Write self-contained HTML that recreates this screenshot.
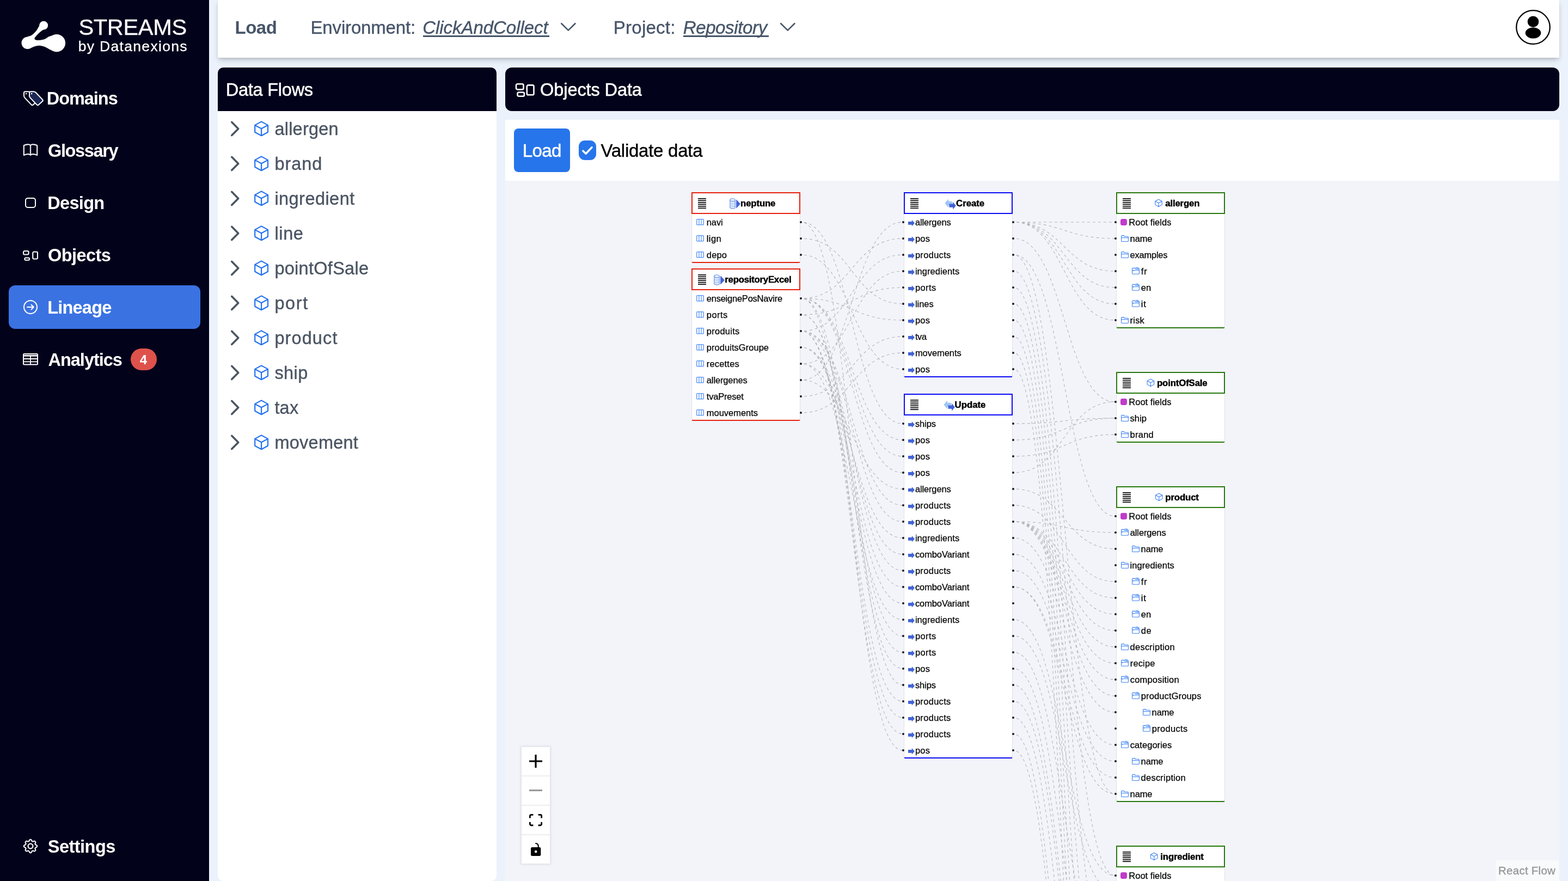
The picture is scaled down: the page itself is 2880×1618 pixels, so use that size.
<!DOCTYPE html>
<html lang="en"><head><meta charset="utf-8"><title>STREAMS by Datanexions - Lineage</title>
<style>
*{box-sizing:border-box;margin:0;padding:0}
html,body{width:2880px;height:1618px;overflow:hidden;background:#ecf2fb;font-family:"Liberation Sans",sans-serif}
body{position:relative}
.t{position:absolute;white-space:nowrap;line-height:1;display:block}
#app{position:absolute;left:0;top:0;width:2880px;height:1618px;overflow:hidden;will-change:transform}

.nh{position:absolute;background:#fff;border:2px solid;height:40px;width:200px}
.nb{position:absolute;background:#fff;border-left:1px solid #dfe1e9;border-right:1px solid #dfe1e9;border-bottom:2px solid;border-radius:0 0 3px 3px;width:200px}
.hd{position:absolute;width:4.4px;height:4.4px;border-radius:50%;background:#1a192b}
</style></head>
<body>
<div id="app">
<aside id="sidebar" aria-label="Main navigation"><div style="position:absolute;left:0px;top:0px;width:384px;height:1618px;background:#02021b;"></div>
<svg style="position:absolute;left:0;top:0;overflow:visible" width="384" height="120"><path d="M80.09 40.75C81.78 41.14 84.50 43.08 85.54 44.32C86.57 45.57 86.57 46.89 86.31 48.21C86.05 49.53 85.54 50.91 83.98 52.26C82.43 53.60 79.45 54.51 76.98 56.30C74.52 58.09 71.46 60.65 69.21 62.99C66.95 65.32 63.97 68.56 63.45 70.30C62.93 72.03 64.49 72.84 66.10 73.41C67.70 73.98 70.37 73.98 73.09 73.72C75.82 73.46 79.32 73.04 82.43 71.85C85.54 70.66 88.13 67.65 91.76 66.56C95.39 65.47 100.05 63.19 104.20 65.32C108.35 67.44 116.64 74.65 116.64 79.32C116.64 83.98 108.09 91.24 104.20 93.31C100.31 95.39 96.68 92.85 93.31 91.76C89.94 90.67 87.09 88.08 83.98 86.78C80.87 85.48 77.76 84.32 74.65 83.98C71.54 83.64 68.43 84.03 65.32 84.76C62.21 85.48 58.58 87.69 55.99 88.34C53.40 88.98 52.10 90.28 49.77 88.65C47.43 87.01 42.12 81.91 41.99 78.54C41.86 75.17 46.40 70.68 48.99 68.43C51.58 66.17 54.69 66.87 57.54 65.01C60.39 63.14 63.89 59.77 66.10 57.23C68.30 54.69 69.65 51.66 70.76 49.77C71.88 47.87 72.01 47.17 72.78 45.88C73.56 44.58 74.21 42.85 75.43 41.99C76.65 41.14 78.41 40.36 80.09 40.75Z" fill="#fff"/><circle cx="80.2" cy="46.7" r="7.9" fill="#fff"/><circle cx="50.6" cy="78.8" r="11.1" fill="#fff"/><circle cx="104" cy="79.1" r="16.1" fill="#fff"/></svg>
<span class="t" style="left:144.47px;top:26px;font-size:41.5px;line-height:47px;letter-spacing:-0.320px;color:#fff;-webkit-text-stroke:0.3px #fff;">STREAMS</span>
<span class="t" style="left:143.64px;top:70px;font-size:26.5px;line-height:30px;letter-spacing:1.331px;color:#fff;-webkit-text-stroke:0.3px #fff;">by Datanexions</span>
<div style="position:absolute;left:16px;top:524px;width:352px;height:80px;background:#3b72e2;border-radius:12px;"></div>
<span class="t" style="left:85.73px;top:163px;font-size:32.5px;line-height:36px;letter-spacing:-1.041px;font-weight:700;color:#fff;">Domains</span>
<span class="t" style="left:88.07px;top:259px;font-size:32.5px;line-height:36px;letter-spacing:-1.386px;font-weight:700;color:#fff;">Glossary</span>
<span class="t" style="left:87.23px;top:355px;font-size:32.5px;line-height:36px;letter-spacing:-0.673px;font-weight:700;color:#fff;">Design</span>
<span class="t" style="left:88.07px;top:451px;font-size:32.5px;line-height:36px;letter-spacing:-0.574px;font-weight:700;color:#fff;">Objects</span>
<span class="t" style="left:87.13px;top:547px;font-size:32.5px;line-height:36px;letter-spacing:-0.771px;font-weight:700;color:#fff;">Lineage</span>
<span class="t" style="left:88.49px;top:643px;font-size:32.5px;line-height:36px;letter-spacing:-1.008px;font-weight:700;color:#fff;">Analytics</span>
<span class="t" style="left:87.76px;top:1537px;font-size:32.5px;line-height:36px;letter-spacing:-0.520px;font-weight:700;color:#fff;">Settings</span>
<svg style="position:absolute;left:43px;top:167px;overflow:visible;" width="38" height="28" viewBox="0 0 38 28"><path d="M1.00 3.40Q1.00 1.20 3.20 1.20L8.80 1.20Q11.00 1.20 12.53 2.78L25.07 15.82Q26.60 17.40 24.98 18.89L17.82 25.51Q16.20 27.00 14.68 25.41L2.52 12.59Q1.00 11.00 1.00 8.80Z" fill="#02021b" stroke="#fff" stroke-width="2" stroke-linejoin="round"/><rect x="3.9" y="3.9" width="2.3" height="2.3" fill="#fff"/><path d="M11.00 3.40Q11.00 1.20 13.20 1.20L18.80 1.20Q21.00 1.20 22.53 2.78L35.07 15.82Q36.60 17.40 34.98 18.89L27.82 25.51Q26.20 27.00 24.68 25.41L12.52 12.59Q11.00 11.00 11.00 8.80Z" fill="#1b2654" stroke="#fff" stroke-width="2" stroke-linejoin="round"/><rect x="13.9" y="3.9" width="2.3" height="2.3" fill="#fff"/></svg>
<svg style="position:absolute;left:43px;top:262.8px;overflow:visible;" width="26" height="26" viewBox="0 0 16 16"><path d="M1 2.828c.885-.37 2.154-.769 3.388-.893 1.33-.134 2.458.063 3.112.752v9.746c-.935-.53-2.12-.603-3.213-.493-1.18.12-2.37.461-3.287.811V2.828zm7.5-.141c.654-.689 1.782-.886 3.112-.752 1.234.124 2.503.523 3.388.893v9.923c-.918-.35-2.107-.692-3.287-.81-1.094-.111-2.278-.039-3.213.492V2.687zM8 1.783C7.015.936 5.587.81 4.287.94c-1.514.153-3.042.672-3.994 1.105A.5.5 0 0 0 0 2.5v11a.5.5 0 0 0 .707.455c.882-.4 2.303-.881 3.68-1.02 1.409-.142 2.59.087 3.223.877a.5.5 0 0 0 .78 0c.633-.79 1.814-1.019 3.222-.877 1.378.139 2.8.62 3.681 1.02A.5.5 0 0 0 16 13.5v-11a.5.5 0 0 0-.293-.455c-.952-.433-2.48-.952-3.994-1.105C10.413.809 8.985.936 8 1.783z" fill="#fff" stroke="#fff" stroke-width="0.3"/></svg>
<svg style="position:absolute;left:46px;top:362.5px;overflow:visible;" width="20" height="19" viewBox="0 0 20 19"><rect x="1" y="1" width="18" height="17" rx="4" fill="none" stroke="#fff" stroke-width="2"/></svg>
<svg style="position:absolute;left:42px;top:460px;overflow:visible;" width="36" height="24" viewBox="0 0 36 24"><rect x="1.05" y="1.05" width="9.50" height="6.50" rx="2" fill="none" stroke="#fff" stroke-width="2.1"/><rect x="3.35" y="13.45" width="8.70" height="4.30" rx="2" fill="none" stroke="#fff" stroke-width="2.1"/><rect x="18.25" y="2.55" width="8.70" height="12.90" rx="2" fill="none" stroke="#fff" stroke-width="2.1"/></svg>
<svg style="position:absolute;left:43px;top:551px;overflow:visible;" width="26" height="26" viewBox="0 0 26 26"><circle cx="13" cy="13" r="12" fill="none" stroke="#fff" stroke-width="2"/><path d="M7 13H18.5M14.5 8.7L18.8 13L14.5 17.3" fill="none" stroke="#fff" stroke-width="2" stroke-linecap="round" stroke-linejoin="round"/></svg>
<svg style="position:absolute;left:42px;top:649.3px;overflow:visible;" width="28" height="21.4" viewBox="0 0 28 21.4"><rect x="1" y="1" width="26" height="19.4" rx="1.5" fill="none" stroke="#fff" stroke-width="2"/><rect x="1" y="3" width="26" height="2.6" fill="#fff"/><path d="M1 10H27M1 15.4H27M14 5V20" stroke="#fff" stroke-width="1.8" fill="none"/></svg>
<svg style="position:absolute;left:43px;top:1541px;overflow:visible;" width="26" height="26" viewBox="0 0 16 16"><path d="M8 4.754a3.246 3.246 0 1 0 0 6.492 3.246 3.246 0 0 0 0-6.492zM5.754 8a2.246 2.246 0 1 1 4.492 0 2.246 2.246 0 0 1-4.492 0z" fill="#fff" stroke="#fff" stroke-width="0.35"/><path d="M9.796 1.343c-.527-1.79-3.065-1.79-3.592 0l-.094.319a.873.873 0 0 1-1.255.52l-.292-.16c-1.64-.892-3.433.902-2.54 2.541l.159.292a.873.873 0 0 1-.52 1.255l-.319.094c-1.79.527-1.79 3.065 0 3.592l.319.094a.873.873 0 0 1 .52 1.255l-.16.292c-.892 1.64.901 3.434 2.541 2.54l.292-.159a.873.873 0 0 1 1.255.52l.094.319c.527 1.79 3.065 1.79 3.592 0l.094-.319a.873.873 0 0 1 1.255-.52l.292.16c1.64.893 3.434-.902 2.54-2.541l-.159-.292a.873.873 0 0 1 .52-1.255l.319-.094c1.79-.527 1.79-3.065 0-3.592l-.319-.094a.873.873 0 0 1-.52-1.255l.16-.292c.893-1.64-.902-3.433-2.541-2.54l-.292.159a.873.873 0 0 1-1.255-.52l-.094-.319zm-2.633.283c.246-.835 1.428-.835 1.674 0l.094.319a1.873 1.873 0 0 0 2.693 1.115l.291-.16c.764-.415 1.6.42 1.184 1.185l-.159.292a1.873 1.873 0 0 0 1.116 2.692l.318.094c.835.246.835 1.428 0 1.674l-.319.094a1.873 1.873 0 0 0-1.115 2.693l.16.291c.415.764-.42 1.6-1.185 1.184l-.291-.159a1.873 1.873 0 0 0-2.693 1.116l-.094.318c-.246.835-1.428.835-1.674 0l-.094-.319a1.873 1.873 0 0 0-2.692-1.115l-.292.16c-.764.415-1.6-.42-1.184-1.185l.159-.291A1.873 1.873 0 0 0 1.945 8.93l-.319-.094c-.835-.246-.835-1.428 0-1.674l.319-.094A1.873 1.873 0 0 0 3.06 4.377l-.16-.292c-.415-.764.42-1.6 1.185-1.184l.292.159a1.873 1.873 0 0 0 2.692-1.115l.094-.319z" fill="#fff" stroke="#fff" stroke-width="0.35"/></svg>
<div style="position:absolute;left:240px;top:640px;width:48px;height:40px;background:#de524b;border-radius:20px;"></div>
<span class="t" style="left:256.84px;top:647px;font-size:24px;line-height:27px;font-weight:700;color:#fff;">4</span></aside>
<header id="topbar"><div style="position:absolute;left:400px;top:0px;width:2464px;height:106px;background:#fff;box-shadow:0 6px 10px -2px rgba(30,35,50,.22),0 2px 4px rgba(30,35,50,.11);"></div>
<span class="t" style="left:431.59px;top:32px;font-size:33px;line-height:37px;letter-spacing:-0.514px;font-weight:700;color:#475569;">Load</span>
<span class="t" style="left:570.49px;top:32px;font-size:33px;line-height:37px;letter-spacing:-0.155px;color:#475569;-webkit-text-stroke:0.4px #475569;">Environment:</span>
<span class="t" style="left:776.18px;top:32px;font-size:33px;line-height:37px;letter-spacing:-0.043px;font-style:italic;color:#475569;-webkit-text-stroke:0.4px #475569;">ClickAndCollect</span>
<div style="position:absolute;left:777px;top:64.5px;width:232px;height:3px;background:#475569;"></div>
<svg style="position:absolute;left:1030.2px;top:42.4px;overflow:visible;" width="27.6" height="15" viewBox="0 0 27.6 15"><path d="M1.2 1.2L13.8 13.6L26.4 1.2" fill="none" stroke="#475569" stroke-width="2.6" stroke-linecap="round" stroke-linejoin="round"/></svg>
<span class="t" style="left:1126.79px;top:32px;font-size:33px;line-height:37px;letter-spacing:0.249px;color:#475569;-webkit-text-stroke:0.4px #475569;">Project:</span>
<span class="t" style="left:1254.68px;top:32px;font-size:33px;line-height:37px;letter-spacing:-0.364px;font-style:italic;color:#475569;-webkit-text-stroke:0.4px #475569;">Repository</span>
<div style="position:absolute;left:1254.5px;top:64.5px;width:157px;height:3px;background:#475569;"></div>
<svg style="position:absolute;left:1433px;top:42.4px;overflow:visible;" width="27.6" height="15" viewBox="0 0 27.6 15"><path d="M1.2 1.2L13.8 13.6L26.4 1.2" fill="none" stroke="#475569" stroke-width="2.6" stroke-linecap="round" stroke-linejoin="round"/></svg>
<svg style="position:absolute;left:2784px;top:18px;overflow:visible;" width="64" height="64" viewBox="0 0 64 64"><circle cx="32" cy="32" r="30.8" fill="#fff" stroke="#000" stroke-width="2.3"/><circle cx="32" cy="21.8" r="10.3" fill="#000"/><ellipse cx="32" cy="42.6" rx="14.3" ry="10" fill="#000"/></svg></header>
<section id="data-flows" aria-label="Data Flows"><div style="position:absolute;left:400px;top:124px;width:512px;height:1494px;background:#fff;border-radius:10px;"></div>
<div style="position:absolute;left:400px;top:124px;width:512px;height:80px;background:#02021b;border-radius:10px 10px 0 0;"></div>
<span class="t" style="left:414.78px;top:147px;font-size:32.5px;line-height:36px;letter-spacing:-0.245px;color:#fff;-webkit-text-stroke:0.5px #fff;">Data Flows</span>
<svg style="position:absolute;left:424.2px;top:222.5px;overflow:visible;" width="16" height="28" viewBox="0 0 16 28"><path d="M1.7 1.3L13.7 13.4L1.7 25.5" fill="none" stroke="#4b5563" stroke-width="3.6" stroke-linejoin="round" stroke-linecap="round"/></svg>
<svg style="position:absolute;left:0;top:0;overflow:visible" width="1" height="1"><path d="M480.10 223.40L492.00 229.85L492.00 242.75L480.10 249.20L468.20 242.75L468.20 229.85ZM468.20 229.85L480.10 236.30L492.00 229.85M480.10 236.30L480.10 249.20" fill="none" stroke="#2472ef" stroke-width="2.2" stroke-linejoin="round"/></svg>
<span class="t" style="left:504.40px;top:219px;font-size:32.5px;line-height:36px;letter-spacing:0.236px;color:#4b5563;-webkit-text-stroke:0.4px #4b5563;">allergen</span>
<svg style="position:absolute;left:424.2px;top:286.5px;overflow:visible;" width="16" height="28" viewBox="0 0 16 28"><path d="M1.7 1.3L13.7 13.4L1.7 25.5" fill="none" stroke="#4b5563" stroke-width="3.6" stroke-linejoin="round" stroke-linecap="round"/></svg>
<svg style="position:absolute;left:0;top:0;overflow:visible" width="1" height="1"><path d="M480.10 287.40L492.00 293.85L492.00 306.75L480.10 313.20L468.20 306.75L468.20 293.85ZM468.20 293.85L480.10 300.30L492.00 293.85M480.10 300.30L480.10 313.20" fill="none" stroke="#2472ef" stroke-width="2.2" stroke-linejoin="round"/></svg>
<span class="t" style="left:504.40px;top:283px;font-size:32.5px;line-height:36px;letter-spacing:0.967px;color:#4b5563;-webkit-text-stroke:0.4px #4b5563;">brand</span>
<svg style="position:absolute;left:424.2px;top:350.5px;overflow:visible;" width="16" height="28" viewBox="0 0 16 28"><path d="M1.7 1.3L13.7 13.4L1.7 25.5" fill="none" stroke="#4b5563" stroke-width="3.6" stroke-linejoin="round" stroke-linecap="round"/></svg>
<svg style="position:absolute;left:0;top:0;overflow:visible" width="1" height="1"><path d="M480.10 351.40L492.00 357.85L492.00 370.75L480.10 377.20L468.20 370.75L468.20 357.85ZM468.20 357.85L480.10 364.30L492.00 357.85M480.10 364.30L480.10 377.20" fill="none" stroke="#2472ef" stroke-width="2.2" stroke-linejoin="round"/></svg>
<span class="t" style="left:504.40px;top:347px;font-size:32.5px;line-height:36px;letter-spacing:0.452px;color:#4b5563;-webkit-text-stroke:0.4px #4b5563;">ingredient</span>
<svg style="position:absolute;left:424.2px;top:414.5px;overflow:visible;" width="16" height="28" viewBox="0 0 16 28"><path d="M1.7 1.3L13.7 13.4L1.7 25.5" fill="none" stroke="#4b5563" stroke-width="3.6" stroke-linejoin="round" stroke-linecap="round"/></svg>
<svg style="position:absolute;left:0;top:0;overflow:visible" width="1" height="1"><path d="M480.10 415.40L492.00 421.85L492.00 434.75L480.10 441.20L468.20 434.75L468.20 421.85ZM468.20 421.85L480.10 428.30L492.00 421.85M480.10 428.30L480.10 441.20" fill="none" stroke="#2472ef" stroke-width="2.2" stroke-linejoin="round"/></svg>
<span class="t" style="left:504.40px;top:411px;font-size:32.5px;line-height:36px;letter-spacing:0.648px;color:#4b5563;-webkit-text-stroke:0.4px #4b5563;">line</span>
<svg style="position:absolute;left:424.2px;top:478.5px;overflow:visible;" width="16" height="28" viewBox="0 0 16 28"><path d="M1.7 1.3L13.7 13.4L1.7 25.5" fill="none" stroke="#4b5563" stroke-width="3.6" stroke-linejoin="round" stroke-linecap="round"/></svg>
<svg style="position:absolute;left:0;top:0;overflow:visible" width="1" height="1"><path d="M480.10 479.40L492.00 485.85L492.00 498.75L480.10 505.20L468.20 498.75L468.20 485.85ZM468.20 485.85L480.10 492.30L492.00 485.85M480.10 492.30L480.10 505.20" fill="none" stroke="#2472ef" stroke-width="2.2" stroke-linejoin="round"/></svg>
<span class="t" style="left:504.40px;top:475px;font-size:32.5px;line-height:36px;letter-spacing:0.281px;color:#4b5563;-webkit-text-stroke:0.4px #4b5563;">pointOfSale</span>
<svg style="position:absolute;left:424.2px;top:542.5px;overflow:visible;" width="16" height="28" viewBox="0 0 16 28"><path d="M1.7 1.3L13.7 13.4L1.7 25.5" fill="none" stroke="#4b5563" stroke-width="3.6" stroke-linejoin="round" stroke-linecap="round"/></svg>
<svg style="position:absolute;left:0;top:0;overflow:visible" width="1" height="1"><path d="M480.10 543.40L492.00 549.85L492.00 562.75L480.10 569.20L468.20 562.75L468.20 549.85ZM468.20 549.85L480.10 556.30L492.00 549.85M480.10 556.30L480.10 569.20" fill="none" stroke="#2472ef" stroke-width="2.2" stroke-linejoin="round"/></svg>
<span class="t" style="left:504.40px;top:539px;font-size:32.5px;line-height:36px;letter-spacing:1.644px;color:#4b5563;-webkit-text-stroke:0.4px #4b5563;">port</span>
<svg style="position:absolute;left:424.2px;top:606.5px;overflow:visible;" width="16" height="28" viewBox="0 0 16 28"><path d="M1.7 1.3L13.7 13.4L1.7 25.5" fill="none" stroke="#4b5563" stroke-width="3.6" stroke-linejoin="round" stroke-linecap="round"/></svg>
<svg style="position:absolute;left:0;top:0;overflow:visible" width="1" height="1"><path d="M480.10 607.40L492.00 613.85L492.00 626.75L480.10 633.20L468.20 626.75L468.20 613.85ZM468.20 613.85L480.10 620.30L492.00 613.85M480.10 620.30L480.10 633.20" fill="none" stroke="#2472ef" stroke-width="2.2" stroke-linejoin="round"/></svg>
<span class="t" style="left:504.40px;top:603px;font-size:32.5px;line-height:36px;letter-spacing:1.105px;color:#4b5563;-webkit-text-stroke:0.4px #4b5563;">product</span>
<svg style="position:absolute;left:424.2px;top:670.5px;overflow:visible;" width="16" height="28" viewBox="0 0 16 28"><path d="M1.7 1.3L13.7 13.4L1.7 25.5" fill="none" stroke="#4b5563" stroke-width="3.6" stroke-linejoin="round" stroke-linecap="round"/></svg>
<svg style="position:absolute;left:0;top:0;overflow:visible" width="1" height="1"><path d="M480.10 671.40L492.00 677.85L492.00 690.75L480.10 697.20L468.20 690.75L468.20 677.85ZM468.20 677.85L480.10 684.30L492.00 677.85M480.10 684.30L480.10 697.20" fill="none" stroke="#2472ef" stroke-width="2.2" stroke-linejoin="round"/></svg>
<span class="t" style="left:504.40px;top:667px;font-size:32.5px;line-height:36px;letter-spacing:0.416px;color:#4b5563;-webkit-text-stroke:0.4px #4b5563;">ship</span>
<svg style="position:absolute;left:424.2px;top:734.5px;overflow:visible;" width="16" height="28" viewBox="0 0 16 28"><path d="M1.7 1.3L13.7 13.4L1.7 25.5" fill="none" stroke="#4b5563" stroke-width="3.6" stroke-linejoin="round" stroke-linecap="round"/></svg>
<svg style="position:absolute;left:0;top:0;overflow:visible" width="1" height="1"><path d="M480.10 735.40L492.00 741.85L492.00 754.75L480.10 761.20L468.20 754.75L468.20 741.85ZM468.20 741.85L480.10 748.30L492.00 741.85M480.10 748.30L480.10 761.20" fill="none" stroke="#2472ef" stroke-width="2.2" stroke-linejoin="round"/></svg>
<span class="t" style="left:504.40px;top:731px;font-size:32.5px;line-height:36px;letter-spacing:0.193px;color:#4b5563;-webkit-text-stroke:0.4px #4b5563;">tax</span>
<svg style="position:absolute;left:424.2px;top:798.5px;overflow:visible;" width="16" height="28" viewBox="0 0 16 28"><path d="M1.7 1.3L13.7 13.4L1.7 25.5" fill="none" stroke="#4b5563" stroke-width="3.6" stroke-linejoin="round" stroke-linecap="round"/></svg>
<svg style="position:absolute;left:0;top:0;overflow:visible" width="1" height="1"><path d="M480.10 799.40L492.00 805.85L492.00 818.75L480.10 825.20L468.20 818.75L468.20 805.85ZM468.20 805.85L480.10 812.30L492.00 805.85M480.10 812.30L480.10 825.20" fill="none" stroke="#2472ef" stroke-width="2.2" stroke-linejoin="round"/></svg>
<span class="t" style="left:504.40px;top:795px;font-size:32.5px;line-height:36px;letter-spacing:0.253px;color:#4b5563;-webkit-text-stroke:0.4px #4b5563;">movement</span></section>
<main id="objects-data" aria-label="Objects Data"><div style="position:absolute;left:928px;top:124px;width:1936px;height:80px;background:#02021b;border-radius:12px;"></div>
<svg style="position:absolute;left:946.8px;top:153.7px;overflow:visible;" width="36" height="24" viewBox="0 0 36 24"><rect x="1.00" y="0.30" width="13.50" height="10.10" rx="2.4" fill="none" stroke="#fff" stroke-width="2.6"/><rect x="3.50" y="15.50" width="12.40" height="7.30" rx="2.4" fill="none" stroke="#fff" stroke-width="2.6"/><rect x="20.80" y="2.40" width="12.70" height="17.90" rx="2.4" fill="none" stroke="#fff" stroke-width="2.6"/></svg>
<span class="t" style="left:992.11px;top:147px;font-size:32.5px;line-height:36px;letter-spacing:-0.093px;color:#fff;-webkit-text-stroke:0.5px #fff;">Objects Data</span>
<div style="position:absolute;left:928px;top:220px;width:1936px;height:112px;background:#fff;"></div>
<div style="position:absolute;left:944px;top:236px;width:103px;height:80px;background:#2775eb;border-radius:8px;"></div>
<span class="t" style="left:959.74px;top:258px;font-size:33px;line-height:37px;letter-spacing:-0.626px;color:#fff;-webkit-text-stroke:0.5px #fff;">Load</span>
<div style="position:absolute;left:1063px;top:258px;width:32px;height:36px;background:#2775eb;border-radius:11px;"></div>
<svg style="position:absolute;left:1063px;top:258px;overflow:visible;" width="32" height="36" viewBox="0 0 32 36"><path d="M7.9 19.2L13.1 24.2L24 12.6" fill="none" stroke="#fff" stroke-width="3.5" stroke-linecap="round" stroke-linejoin="round"/></svg>
<span class="t" style="left:1103.45px;top:258px;font-size:33px;line-height:37px;letter-spacing:-0.255px;-webkit-text-stroke:0.4px #000;">Validate data</span><div style="position:absolute;left:928px;top:332px;width:1936px;height:1286px;background:#f3f4f9;overflow:hidden">
<div style="position:absolute;left:-928px;top:-332px;width:2880px;height:1618px">
<svg style="position:absolute;left:0;top:0" width="2864" height="1618" viewBox="0 0 2864 1618"><path d="M1472.0 698.0C1565.0 698.0 1565.0 408.0 1658.0 408.0M1472.0 548.0C1565.0 548.0 1565.0 438.0 1658.0 438.0M1472.0 608.0C1565.0 608.0 1565.0 468.0 1658.0 468.0M1472.0 668.0C1565.0 668.0 1565.0 498.0 1658.0 498.0M1472.0 578.0C1565.0 578.0 1565.0 528.0 1658.0 528.0M1472.0 438.0C1565.0 438.0 1565.0 558.0 1658.0 558.0M1472.0 548.0C1565.0 548.0 1565.0 588.0 1658.0 588.0M1472.0 728.0C1565.0 728.0 1565.0 618.0 1658.0 618.0M1472.0 758.0C1565.0 758.0 1565.0 648.0 1658.0 648.0M1472.0 468.0C1565.0 468.0 1565.0 678.0 1658.0 678.0M1472.0 408.0C1565.0 408.0 1565.0 778.0 1658.0 778.0M1472.0 548.0C1565.0 548.0 1565.0 808.0 1658.0 808.0M1472.0 548.0C1565.0 548.0 1565.0 838.0 1658.0 838.0M1472.0 548.0C1565.0 548.0 1565.0 868.0 1658.0 868.0M1472.0 698.0C1565.0 698.0 1565.0 898.0 1658.0 898.0M1472.0 608.0C1565.0 608.0 1565.0 928.0 1658.0 928.0M1472.0 608.0C1565.0 608.0 1565.0 958.0 1658.0 958.0M1472.0 668.0C1565.0 668.0 1565.0 988.0 1658.0 988.0M1472.0 638.0C1565.0 638.0 1565.0 1018.0 1658.0 1018.0M1472.0 608.0C1565.0 608.0 1565.0 1048.0 1658.0 1048.0M1472.0 638.0C1565.0 638.0 1565.0 1078.0 1658.0 1078.0M1472.0 638.0C1565.0 638.0 1565.0 1108.0 1658.0 1108.0M1472.0 668.0C1565.0 668.0 1565.0 1138.0 1658.0 1138.0M1472.0 578.0C1565.0 578.0 1565.0 1168.0 1658.0 1168.0M1472.0 578.0C1565.0 578.0 1565.0 1198.0 1658.0 1198.0M1472.0 548.0C1565.0 548.0 1565.0 1228.0 1658.0 1228.0M1472.0 408.0C1565.0 408.0 1565.0 1258.0 1658.0 1258.0M1472.0 608.0C1565.0 608.0 1565.0 1288.0 1658.0 1288.0M1472.0 608.0C1565.0 608.0 1565.0 1318.0 1658.0 1318.0M1472.0 608.0C1565.0 608.0 1565.0 1348.0 1658.0 1348.0M1472.0 548.0C1565.0 548.0 1565.0 1378.0 1658.0 1378.0M1862.0 408.0C1955.0 408.0 1955.0 408.0 2048.0 408.0M1862.0 408.0C1955.0 408.0 1955.0 438.0 2048.0 438.0M1862.0 408.0C1955.0 408.0 1955.0 498.0 2048.0 498.0M1862.0 408.0C1955.0 408.0 1955.0 528.0 2048.0 528.0M1862.0 408.0C1955.0 408.0 1955.0 558.0 2048.0 558.0M1862.0 408.0C1955.0 408.0 1955.0 588.0 2048.0 588.0M1862.0 438.0C1955.0 438.0 1955.0 738.0 2048.0 738.0M1862.0 468.0C1955.0 468.0 1955.0 948.0 2048.0 948.0M1862.0 468.0C1955.0 468.0 1955.0 1458.0 2048.0 1458.0M1862.0 498.0C1955.0 498.0 1955.0 1608.0 2048.0 1608.0M1862.0 528.0C1955.0 528.0 1955.0 1790.0 2048.0 1790.0M1862.0 558.0C1955.0 558.0 1955.0 1942.0 2048.0 1942.0M1862.0 588.0C1955.0 588.0 1955.0 2094.0 2048.0 2094.0M1862.0 618.0C1955.0 618.0 1955.0 2276.0 2048.0 2276.0M1862.0 648.0C1955.0 648.0 1955.0 2428.0 2048.0 2428.0M1862.0 678.0C1955.0 678.0 1955.0 2620.0 2048.0 2620.0M1862.0 778.0C1955.0 778.0 1955.0 768.0 2048.0 768.0M1862.0 808.0C1955.0 808.0 1955.0 768.0 2048.0 768.0M1862.0 838.0C1955.0 838.0 1955.0 798.0 2048.0 798.0M1862.0 868.0C1955.0 868.0 1955.0 738.0 2048.0 738.0M1862.0 898.0C1955.0 898.0 1955.0 1008.0 2048.0 1008.0M1862.0 928.0C1955.0 928.0 1955.0 1068.0 2048.0 1068.0M1862.0 958.0C1955.0 958.0 1955.0 978.0 2048.0 978.0M1862.0 958.0C1955.0 958.0 1955.0 1098.0 2048.0 1098.0M1862.0 958.0C1955.0 958.0 1955.0 1128.0 2048.0 1128.0M1862.0 958.0C1955.0 958.0 1955.0 1158.0 2048.0 1158.0M1862.0 958.0C1955.0 958.0 1955.0 1188.0 2048.0 1188.0M1862.0 958.0C1955.0 958.0 1955.0 1218.0 2048.0 1218.0M1862.0 958.0C1955.0 958.0 1955.0 1248.0 2048.0 1248.0M1862.0 958.0C1955.0 958.0 1955.0 1278.0 2048.0 1278.0M1862.0 988.0C1955.0 988.0 1955.0 1308.0 2048.0 1308.0M1862.0 1018.0C1955.0 1018.0 1955.0 1368.0 2048.0 1368.0M1862.0 1048.0C1955.0 1048.0 1955.0 1398.0 2048.0 1398.0M1862.0 1078.0C1955.0 1078.0 1955.0 1428.0 2048.0 1428.0M1862.0 1078.0C1955.0 1078.0 1955.0 1458.0 2048.0 1458.0M1862.0 1138.0C1955.0 1138.0 1955.0 1608.0 2048.0 1608.0M1862.0 1168.0C1955.0 1168.0 1955.0 1638.0 2048.0 1638.0M1862.0 1198.0C1955.0 1198.0 1955.0 1790.0 2048.0 1790.0M1862.0 1228.0C1955.0 1228.0 1955.0 1942.0 2048.0 1942.0M1862.0 1258.0C1955.0 1258.0 1955.0 2094.0 2048.0 2094.0M1862.0 1288.0C1955.0 1288.0 1955.0 2124.0 2048.0 2124.0M1862.0 1318.0C1955.0 1318.0 1955.0 2276.0 2048.0 2276.0M1862.0 1348.0C1955.0 1348.0 1955.0 2580.0 2048.0 2580.0M1862.0 1378.0C1955.0 1378.0 1955.0 2670.0 2048.0 2670.0" fill="none" stroke="#b4b4ba" stroke-width="1.1" stroke-dasharray="5 5" stroke-dashoffset="5"/></svg>
<div class="nb" style="left:1270px;top:392px;height:91.4px;border-bottom-color:#e6200f"></div>
<div class="nh" style="left:1270px;top:353px;border-color:#e6200f"></div>
<svg style="position:absolute;left:1281.7px;top:363.5px;overflow:visible;" width="15" height="19.2" viewBox="0 0 15 19.2"><rect x="0" y="0.00" width="15" height="1.7" fill="#000"/><rect x="0" y="3.47" width="15" height="1.7" fill="#000"/><rect x="0" y="6.94" width="15" height="1.7" fill="#000"/><rect x="0" y="10.41" width="15" height="1.7" fill="#000"/><rect x="0" y="13.88" width="15" height="1.7" fill="#000"/><rect x="0" y="17.35" width="15" height="1.7" fill="#000"/></svg>
<svg style="position:absolute;left:1339.9px;top:364.40000000000003px;overflow:visible;" width="20" height="20" viewBox="0 0 20 20"><path d="M0.8 3.2v13.4c0 1.5 2.1 2.6 4.8 2.6s4.8-1.1 4.8-2.6V3.2" fill="#d6e8fc" stroke="#6a8be6" stroke-width="1.1"/><ellipse cx="5.6" cy="3.2" rx="4.8" ry="2.4" fill="#eaf3fe" stroke="#6a8be6" stroke-width="1.1"/><path d="M0.8 8c0 1.4 2.1 2.4 4.8 2.4s4.8-1 4.8-2.4M0.8 12.4c0 1.4 2.1 2.4 4.8 2.4s4.8-1 4.8-2.4" fill="none" stroke="#9fc0f4" stroke-width="1"/><path d="M12.2 2.2L20 10.4L12.2 18.8Z" fill="#4263d7"/></svg>
<span class="t" style="left:1360.02px;top:364px;font-size:16.8px;line-height:19px;letter-spacing:-0.138px;font-weight:700;-webkit-text-stroke:0.45px #000;">neptune</span>
<svg style="position:absolute;left:1279.3px;top:402.2px;overflow:visible;" width="14" height="11.6" viewBox="0 0 14 11.6"><rect x="0.7" y="0.7" width="12.6" height="10.2" rx="1" fill="none" stroke="#4f8ff7" stroke-width="1.3"/><path d="M4.9 0.7V10.9M9.1 0.7V10.9" stroke="#4f8ff7" stroke-width="1.2"/></svg>
<span class="t" style="left:1297.80px;top:399px;font-size:16.5px;line-height:18px;letter-spacing:-0.104px;-webkit-text-stroke:0.25px #000;">navi</span>
<i class="hd" style="left:1468.8px;top:405.9px"></i>
<svg style="position:absolute;left:1279.3px;top:432.2px;overflow:visible;" width="14" height="11.6" viewBox="0 0 14 11.6"><rect x="0.7" y="0.7" width="12.6" height="10.2" rx="1" fill="none" stroke="#4f8ff7" stroke-width="1.3"/><path d="M4.9 0.7V10.9M9.1 0.7V10.9" stroke="#4f8ff7" stroke-width="1.2"/></svg>
<span class="t" style="left:1297.80px;top:429px;font-size:16.5px;line-height:18px;letter-spacing:0.383px;-webkit-text-stroke:0.25px #000;">lign</span>
<i class="hd" style="left:1468.8px;top:435.9px"></i>
<svg style="position:absolute;left:1279.3px;top:462.2px;overflow:visible;" width="14" height="11.6" viewBox="0 0 14 11.6"><rect x="0.7" y="0.7" width="12.6" height="10.2" rx="1" fill="none" stroke="#4f8ff7" stroke-width="1.3"/><path d="M4.9 0.7V10.9M9.1 0.7V10.9" stroke="#4f8ff7" stroke-width="1.2"/></svg>
<span class="t" style="left:1297.80px;top:459px;font-size:16.5px;line-height:18px;letter-spacing:0.177px;-webkit-text-stroke:0.25px #000;">depo</span>
<i class="hd" style="left:1468.8px;top:465.9px"></i>
<div class="nb" style="left:1270px;top:532px;height:241.4px;border-bottom-color:#e6200f"></div>
<div class="nh" style="left:1270px;top:493px;border-color:#e6200f"></div>
<svg style="position:absolute;left:1281.7px;top:503.5px;overflow:visible;" width="15" height="19.2" viewBox="0 0 15 19.2"><rect x="0" y="0.00" width="15" height="1.7" fill="#000"/><rect x="0" y="3.47" width="15" height="1.7" fill="#000"/><rect x="0" y="6.94" width="15" height="1.7" fill="#000"/><rect x="0" y="10.41" width="15" height="1.7" fill="#000"/><rect x="0" y="13.88" width="15" height="1.7" fill="#000"/><rect x="0" y="17.35" width="15" height="1.7" fill="#000"/></svg>
<svg style="position:absolute;left:1311.2px;top:504.4px;overflow:visible;" width="20" height="20" viewBox="0 0 20 20"><path d="M0.8 3.2v13.4c0 1.5 2.1 2.6 4.8 2.6s4.8-1.1 4.8-2.6V3.2" fill="#d6e8fc" stroke="#6a8be6" stroke-width="1.1"/><ellipse cx="5.6" cy="3.2" rx="4.8" ry="2.4" fill="#eaf3fe" stroke="#6a8be6" stroke-width="1.1"/><path d="M0.8 8c0 1.4 2.1 2.4 4.8 2.4s4.8-1 4.8-2.4M0.8 12.4c0 1.4 2.1 2.4 4.8 2.4s4.8-1 4.8-2.4" fill="none" stroke="#9fc0f4" stroke-width="1"/><path d="M12.2 2.2L20 10.4L12.2 18.8Z" fill="#4263d7"/></svg>
<span class="t" style="left:1331.32px;top:504px;font-size:16.8px;line-height:19px;letter-spacing:-0.248px;font-weight:700;-webkit-text-stroke:0.45px #000;">repositoryExcel</span>
<svg style="position:absolute;left:1279.3px;top:542.2px;overflow:visible;" width="14" height="11.6" viewBox="0 0 14 11.6"><rect x="0.7" y="0.7" width="12.6" height="10.2" rx="1" fill="none" stroke="#4f8ff7" stroke-width="1.3"/><path d="M4.9 0.7V10.9M9.1 0.7V10.9" stroke="#4f8ff7" stroke-width="1.2"/></svg>
<span class="t" style="left:1297.80px;top:539px;font-size:16.5px;line-height:18px;letter-spacing:-0.238px;-webkit-text-stroke:0.25px #000;">enseignePosNavire</span>
<i class="hd" style="left:1468.8px;top:545.9px"></i>
<svg style="position:absolute;left:1279.3px;top:572.2px;overflow:visible;" width="14" height="11.6" viewBox="0 0 14 11.6"><rect x="0.7" y="0.7" width="12.6" height="10.2" rx="1" fill="none" stroke="#4f8ff7" stroke-width="1.3"/><path d="M4.9 0.7V10.9M9.1 0.7V10.9" stroke="#4f8ff7" stroke-width="1.2"/></svg>
<span class="t" style="left:1297.80px;top:569px;font-size:16.5px;line-height:18px;letter-spacing:0.432px;-webkit-text-stroke:0.25px #000;">ports</span>
<i class="hd" style="left:1468.8px;top:575.9px"></i>
<svg style="position:absolute;left:1279.3px;top:602.2px;overflow:visible;" width="14" height="11.6" viewBox="0 0 14 11.6"><rect x="0.7" y="0.7" width="12.6" height="10.2" rx="1" fill="none" stroke="#4f8ff7" stroke-width="1.3"/><path d="M4.9 0.7V10.9M9.1 0.7V10.9" stroke="#4f8ff7" stroke-width="1.2"/></svg>
<span class="t" style="left:1297.80px;top:599px;font-size:16.5px;line-height:18px;letter-spacing:0.244px;-webkit-text-stroke:0.25px #000;">produits</span>
<i class="hd" style="left:1468.8px;top:605.9px"></i>
<svg style="position:absolute;left:1279.3px;top:632.2px;overflow:visible;" width="14" height="11.6" viewBox="0 0 14 11.6"><rect x="0.7" y="0.7" width="12.6" height="10.2" rx="1" fill="none" stroke="#4f8ff7" stroke-width="1.3"/><path d="M4.9 0.7V10.9M9.1 0.7V10.9" stroke="#4f8ff7" stroke-width="1.2"/></svg>
<span class="t" style="left:1297.80px;top:629px;font-size:16.5px;line-height:18px;letter-spacing:0.039px;-webkit-text-stroke:0.25px #000;">produitsGroupe</span>
<i class="hd" style="left:1468.8px;top:635.9px"></i>
<svg style="position:absolute;left:1279.3px;top:662.2px;overflow:visible;" width="14" height="11.6" viewBox="0 0 14 11.6"><rect x="0.7" y="0.7" width="12.6" height="10.2" rx="1" fill="none" stroke="#4f8ff7" stroke-width="1.3"/><path d="M4.9 0.7V10.9M9.1 0.7V10.9" stroke="#4f8ff7" stroke-width="1.2"/></svg>
<span class="t" style="left:1297.80px;top:659px;font-size:16.5px;line-height:18px;letter-spacing:0.178px;-webkit-text-stroke:0.25px #000;">recettes</span>
<i class="hd" style="left:1468.8px;top:665.9px"></i>
<svg style="position:absolute;left:1279.3px;top:692.2px;overflow:visible;" width="14" height="11.6" viewBox="0 0 14 11.6"><rect x="0.7" y="0.7" width="12.6" height="10.2" rx="1" fill="none" stroke="#4f8ff7" stroke-width="1.3"/><path d="M4.9 0.7V10.9M9.1 0.7V10.9" stroke="#4f8ff7" stroke-width="1.2"/></svg>
<span class="t" style="left:1297.80px;top:689px;font-size:16.5px;line-height:18px;letter-spacing:-0.132px;-webkit-text-stroke:0.25px #000;">allergenes</span>
<i class="hd" style="left:1468.8px;top:695.9px"></i>
<svg style="position:absolute;left:1279.3px;top:722.2px;overflow:visible;" width="14" height="11.6" viewBox="0 0 14 11.6"><rect x="0.7" y="0.7" width="12.6" height="10.2" rx="1" fill="none" stroke="#4f8ff7" stroke-width="1.3"/><path d="M4.9 0.7V10.9M9.1 0.7V10.9" stroke="#4f8ff7" stroke-width="1.2"/></svg>
<span class="t" style="left:1297.80px;top:719px;font-size:16.5px;line-height:18px;letter-spacing:-0.210px;-webkit-text-stroke:0.25px #000;">tvaPreset</span>
<i class="hd" style="left:1468.8px;top:725.9px"></i>
<svg style="position:absolute;left:1279.3px;top:752.2px;overflow:visible;" width="14" height="11.6" viewBox="0 0 14 11.6"><rect x="0.7" y="0.7" width="12.6" height="10.2" rx="1" fill="none" stroke="#4f8ff7" stroke-width="1.3"/><path d="M4.9 0.7V10.9M9.1 0.7V10.9" stroke="#4f8ff7" stroke-width="1.2"/></svg>
<span class="t" style="left:1297.80px;top:749px;font-size:16.5px;line-height:18px;letter-spacing:-0.024px;-webkit-text-stroke:0.25px #000;">mouvements</span>
<i class="hd" style="left:1468.8px;top:755.9px"></i>
<div class="nb" style="left:1660px;top:392px;height:301.4px;border-bottom-color:#0b0bf5"></div>
<div class="nh" style="left:1660px;top:353px;border-color:#0b0bf5"></div>
<svg style="position:absolute;left:1671.7px;top:363.5px;overflow:visible;" width="15" height="19.2" viewBox="0 0 15 19.2"><rect x="0" y="0.00" width="15" height="1.7" fill="#000"/><rect x="0" y="3.47" width="15" height="1.7" fill="#000"/><rect x="0" y="6.94" width="15" height="1.7" fill="#000"/><rect x="0" y="10.41" width="15" height="1.7" fill="#000"/><rect x="0" y="13.88" width="15" height="1.7" fill="#000"/><rect x="0" y="17.35" width="15" height="1.7" fill="#000"/></svg>
<svg style="position:absolute;left:1736.15px;top:365.5px;overflow:visible;" width="20" height="19" viewBox="0 0 20 19"><path d="M0 7.2L5.6 0.3V4.2H12.6V10.4H5.6V14.2Z" fill="#9ec6f7" stroke="#86b2ee" stroke-width="0.6"/><path d="M19.8 11.8L14.2 4.8V8.6H7.4V14.8H14.2V18.8Z" fill="#4263d7"/></svg>
<span class="t" style="left:1756.09px;top:364px;font-size:16.8px;line-height:19px;letter-spacing:-0.025px;font-weight:700;-webkit-text-stroke:0.45px #000;">Create</span>
<svg style="position:absolute;left:1668px;top:404.2px;overflow:visible;" width="12" height="11.6" viewBox="0 0 12 11.6"><path d="M0 2.9H6.8V0L12 5.8L6.8 11.6V8.7H0Z" fill="#4263d7"/></svg>
<span class="t" style="left:1680.90px;top:399px;font-size:16.5px;line-height:18px;letter-spacing:-0.139px;-webkit-text-stroke:0.25px #000;">allergens</span>
<i class="hd" style="left:1656.8px;top:405.9px"></i>
<i class="hd" style="left:1858.8px;top:405.9px"></i>
<svg style="position:absolute;left:1668px;top:434.2px;overflow:visible;" width="12" height="11.6" viewBox="0 0 12 11.6"><path d="M0 2.9H6.8V0L12 5.8L6.8 11.6V8.7H0Z" fill="#4263d7"/></svg>
<span class="t" style="left:1680.90px;top:429px;font-size:16.5px;line-height:18px;letter-spacing:0.253px;-webkit-text-stroke:0.25px #000;">pos</span>
<i class="hd" style="left:1656.8px;top:435.9px"></i>
<i class="hd" style="left:1858.8px;top:435.9px"></i>
<svg style="position:absolute;left:1668px;top:464.2px;overflow:visible;" width="12" height="11.6" viewBox="0 0 12 11.6"><path d="M0 2.9H6.8V0L12 5.8L6.8 11.6V8.7H0Z" fill="#4263d7"/></svg>
<span class="t" style="left:1680.90px;top:459px;font-size:16.5px;line-height:18px;letter-spacing:0.304px;-webkit-text-stroke:0.25px #000;">products</span>
<i class="hd" style="left:1656.8px;top:465.9px"></i>
<i class="hd" style="left:1858.8px;top:465.9px"></i>
<svg style="position:absolute;left:1668px;top:494.2px;overflow:visible;" width="12" height="11.6" viewBox="0 0 12 11.6"><path d="M0 2.9H6.8V0L12 5.8L6.8 11.6V8.7H0Z" fill="#4263d7"/></svg>
<span class="t" style="left:1680.90px;top:489px;font-size:16.5px;line-height:18px;letter-spacing:0.053px;-webkit-text-stroke:0.25px #000;">ingredients</span>
<i class="hd" style="left:1656.8px;top:495.9px"></i>
<i class="hd" style="left:1858.8px;top:495.9px"></i>
<svg style="position:absolute;left:1668px;top:524.2px;overflow:visible;" width="12" height="11.6" viewBox="0 0 12 11.6"><path d="M0 2.9H6.8V0L12 5.8L6.8 11.6V8.7H0Z" fill="#4263d7"/></svg>
<span class="t" style="left:1680.90px;top:519px;font-size:16.5px;line-height:18px;letter-spacing:0.432px;-webkit-text-stroke:0.25px #000;">ports</span>
<i class="hd" style="left:1656.8px;top:525.9px"></i>
<i class="hd" style="left:1858.8px;top:525.9px"></i>
<svg style="position:absolute;left:1668px;top:554.2px;overflow:visible;" width="12" height="11.6" viewBox="0 0 12 11.6"><path d="M0 2.9H6.8V0L12 5.8L6.8 11.6V8.7H0Z" fill="#4263d7"/></svg>
<span class="t" style="left:1680.90px;top:549px;font-size:16.5px;line-height:18px;letter-spacing:-0.044px;-webkit-text-stroke:0.25px #000;">lines</span>
<i class="hd" style="left:1656.8px;top:555.9px"></i>
<i class="hd" style="left:1858.8px;top:555.9px"></i>
<svg style="position:absolute;left:1668px;top:584.2px;overflow:visible;" width="12" height="11.6" viewBox="0 0 12 11.6"><path d="M0 2.9H6.8V0L12 5.8L6.8 11.6V8.7H0Z" fill="#4263d7"/></svg>
<span class="t" style="left:1680.90px;top:579px;font-size:16.5px;line-height:18px;letter-spacing:0.253px;-webkit-text-stroke:0.25px #000;">pos</span>
<i class="hd" style="left:1656.8px;top:585.9px"></i>
<i class="hd" style="left:1858.8px;top:585.9px"></i>
<svg style="position:absolute;left:1668px;top:614.2px;overflow:visible;" width="12" height="11.6" viewBox="0 0 12 11.6"><path d="M0 2.9H6.8V0L12 5.8L6.8 11.6V8.7H0Z" fill="#4263d7"/></svg>
<span class="t" style="left:1680.90px;top:609px;font-size:16.5px;line-height:18px;letter-spacing:-0.405px;-webkit-text-stroke:0.25px #000;">tva</span>
<i class="hd" style="left:1656.8px;top:615.9px"></i>
<i class="hd" style="left:1858.8px;top:615.9px"></i>
<svg style="position:absolute;left:1668px;top:644.2px;overflow:visible;" width="12" height="11.6" viewBox="0 0 12 11.6"><path d="M0 2.9H6.8V0L12 5.8L6.8 11.6V8.7H0Z" fill="#4263d7"/></svg>
<span class="t" style="left:1680.90px;top:639px;font-size:16.5px;line-height:18px;letter-spacing:-0.055px;-webkit-text-stroke:0.25px #000;">movements</span>
<i class="hd" style="left:1656.8px;top:645.9px"></i>
<i class="hd" style="left:1858.8px;top:645.9px"></i>
<svg style="position:absolute;left:1668px;top:674.2px;overflow:visible;" width="12" height="11.6" viewBox="0 0 12 11.6"><path d="M0 2.9H6.8V0L12 5.8L6.8 11.6V8.7H0Z" fill="#4263d7"/></svg>
<span class="t" style="left:1680.90px;top:669px;font-size:16.5px;line-height:18px;letter-spacing:0.253px;-webkit-text-stroke:0.25px #000;">pos</span>
<i class="hd" style="left:1656.8px;top:675.9px"></i>
<i class="hd" style="left:1858.8px;top:675.9px"></i>
<div class="nb" style="left:1660px;top:762px;height:631.4px;border-bottom-color:#0b0bf5"></div>
<div class="nh" style="left:1660px;top:723px;border-color:#0b0bf5"></div>
<svg style="position:absolute;left:1671.7px;top:733.5px;overflow:visible;" width="15" height="19.2" viewBox="0 0 15 19.2"><rect x="0" y="0.00" width="15" height="1.7" fill="#000"/><rect x="0" y="3.47" width="15" height="1.7" fill="#000"/><rect x="0" y="6.94" width="15" height="1.7" fill="#000"/><rect x="0" y="10.41" width="15" height="1.7" fill="#000"/><rect x="0" y="13.88" width="15" height="1.7" fill="#000"/><rect x="0" y="17.35" width="15" height="1.7" fill="#000"/></svg>
<svg style="position:absolute;left:1733.9px;top:735.5px;overflow:visible;" width="20" height="19" viewBox="0 0 20 19"><path d="M0 7.2L5.6 0.3V4.2H12.6V10.4H5.6V14.2Z" fill="#9ec6f7" stroke="#86b2ee" stroke-width="0.6"/><path d="M19.8 11.8L14.2 4.8V8.6H7.4V14.8H14.2V18.8Z" fill="#4263d7"/></svg>
<span class="t" style="left:1753.52px;top:734px;font-size:16.8px;line-height:19px;letter-spacing:0.012px;font-weight:700;-webkit-text-stroke:0.45px #000;">Update</span>
<svg style="position:absolute;left:1668px;top:774.2px;overflow:visible;" width="12" height="11.6" viewBox="0 0 12 11.6"><path d="M0 2.9H6.8V0L12 5.8L6.8 11.6V8.7H0Z" fill="#4263d7"/></svg>
<span class="t" style="left:1680.90px;top:769px;font-size:16.5px;line-height:18px;letter-spacing:-0.103px;-webkit-text-stroke:0.25px #000;">ships</span>
<i class="hd" style="left:1656.8px;top:775.9px"></i>
<i class="hd" style="left:1858.8px;top:775.9px"></i>
<svg style="position:absolute;left:1668px;top:804.2px;overflow:visible;" width="12" height="11.6" viewBox="0 0 12 11.6"><path d="M0 2.9H6.8V0L12 5.8L6.8 11.6V8.7H0Z" fill="#4263d7"/></svg>
<span class="t" style="left:1680.90px;top:799px;font-size:16.5px;line-height:18px;letter-spacing:0.253px;-webkit-text-stroke:0.25px #000;">pos</span>
<i class="hd" style="left:1656.8px;top:805.9px"></i>
<i class="hd" style="left:1858.8px;top:805.9px"></i>
<svg style="position:absolute;left:1668px;top:834.2px;overflow:visible;" width="12" height="11.6" viewBox="0 0 12 11.6"><path d="M0 2.9H6.8V0L12 5.8L6.8 11.6V8.7H0Z" fill="#4263d7"/></svg>
<span class="t" style="left:1680.90px;top:829px;font-size:16.5px;line-height:18px;letter-spacing:0.253px;-webkit-text-stroke:0.25px #000;">pos</span>
<i class="hd" style="left:1656.8px;top:835.9px"></i>
<i class="hd" style="left:1858.8px;top:835.9px"></i>
<svg style="position:absolute;left:1668px;top:864.2px;overflow:visible;" width="12" height="11.6" viewBox="0 0 12 11.6"><path d="M0 2.9H6.8V0L12 5.8L6.8 11.6V8.7H0Z" fill="#4263d7"/></svg>
<span class="t" style="left:1680.90px;top:859px;font-size:16.5px;line-height:18px;letter-spacing:0.253px;-webkit-text-stroke:0.25px #000;">pos</span>
<i class="hd" style="left:1656.8px;top:865.9px"></i>
<i class="hd" style="left:1858.8px;top:865.9px"></i>
<svg style="position:absolute;left:1668px;top:894.2px;overflow:visible;" width="12" height="11.6" viewBox="0 0 12 11.6"><path d="M0 2.9H6.8V0L12 5.8L6.8 11.6V8.7H0Z" fill="#4263d7"/></svg>
<span class="t" style="left:1680.90px;top:889px;font-size:16.5px;line-height:18px;letter-spacing:-0.139px;-webkit-text-stroke:0.25px #000;">allergens</span>
<i class="hd" style="left:1656.8px;top:895.9px"></i>
<i class="hd" style="left:1858.8px;top:895.9px"></i>
<svg style="position:absolute;left:1668px;top:924.2px;overflow:visible;" width="12" height="11.6" viewBox="0 0 12 11.6"><path d="M0 2.9H6.8V0L12 5.8L6.8 11.6V8.7H0Z" fill="#4263d7"/></svg>
<span class="t" style="left:1680.90px;top:919px;font-size:16.5px;line-height:18px;letter-spacing:0.304px;-webkit-text-stroke:0.25px #000;">products</span>
<i class="hd" style="left:1656.8px;top:925.9px"></i>
<i class="hd" style="left:1858.8px;top:925.9px"></i>
<svg style="position:absolute;left:1668px;top:954.2px;overflow:visible;" width="12" height="11.6" viewBox="0 0 12 11.6"><path d="M0 2.9H6.8V0L12 5.8L6.8 11.6V8.7H0Z" fill="#4263d7"/></svg>
<span class="t" style="left:1680.90px;top:949px;font-size:16.5px;line-height:18px;letter-spacing:0.304px;-webkit-text-stroke:0.25px #000;">products</span>
<i class="hd" style="left:1656.8px;top:955.9px"></i>
<i class="hd" style="left:1858.8px;top:955.9px"></i>
<svg style="position:absolute;left:1668px;top:984.2px;overflow:visible;" width="12" height="11.6" viewBox="0 0 12 11.6"><path d="M0 2.9H6.8V0L12 5.8L6.8 11.6V8.7H0Z" fill="#4263d7"/></svg>
<span class="t" style="left:1680.90px;top:979px;font-size:16.5px;line-height:18px;letter-spacing:0.053px;-webkit-text-stroke:0.25px #000;">ingredients</span>
<i class="hd" style="left:1656.8px;top:985.9px"></i>
<i class="hd" style="left:1858.8px;top:985.9px"></i>
<svg style="position:absolute;left:1668px;top:1014.2px;overflow:visible;" width="12" height="11.6" viewBox="0 0 12 11.6"><path d="M0 2.9H6.8V0L12 5.8L6.8 11.6V8.7H0Z" fill="#4263d7"/></svg>
<span class="t" style="left:1680.90px;top:1009px;font-size:16.5px;line-height:18px;letter-spacing:-0.092px;-webkit-text-stroke:0.25px #000;">comboVariant</span>
<i class="hd" style="left:1656.8px;top:1015.9px"></i>
<i class="hd" style="left:1858.8px;top:1015.9px"></i>
<svg style="position:absolute;left:1668px;top:1044.2px;overflow:visible;" width="12" height="11.6" viewBox="0 0 12 11.6"><path d="M0 2.9H6.8V0L12 5.8L6.8 11.6V8.7H0Z" fill="#4263d7"/></svg>
<span class="t" style="left:1680.90px;top:1039px;font-size:16.5px;line-height:18px;letter-spacing:0.304px;-webkit-text-stroke:0.25px #000;">products</span>
<i class="hd" style="left:1656.8px;top:1045.9px"></i>
<i class="hd" style="left:1858.8px;top:1045.9px"></i>
<svg style="position:absolute;left:1668px;top:1074.2px;overflow:visible;" width="12" height="11.6" viewBox="0 0 12 11.6"><path d="M0 2.9H6.8V0L12 5.8L6.8 11.6V8.7H0Z" fill="#4263d7"/></svg>
<span class="t" style="left:1680.90px;top:1069px;font-size:16.5px;line-height:18px;letter-spacing:-0.092px;-webkit-text-stroke:0.25px #000;">comboVariant</span>
<i class="hd" style="left:1656.8px;top:1075.9px"></i>
<i class="hd" style="left:1858.8px;top:1075.9px"></i>
<svg style="position:absolute;left:1668px;top:1104.2px;overflow:visible;" width="12" height="11.6" viewBox="0 0 12 11.6"><path d="M0 2.9H6.8V0L12 5.8L6.8 11.6V8.7H0Z" fill="#4263d7"/></svg>
<span class="t" style="left:1680.90px;top:1099px;font-size:16.5px;line-height:18px;letter-spacing:-0.092px;-webkit-text-stroke:0.25px #000;">comboVariant</span>
<i class="hd" style="left:1656.8px;top:1105.9px"></i>
<i class="hd" style="left:1858.8px;top:1105.9px"></i>
<svg style="position:absolute;left:1668px;top:1134.2px;overflow:visible;" width="12" height="11.6" viewBox="0 0 12 11.6"><path d="M0 2.9H6.8V0L12 5.8L6.8 11.6V8.7H0Z" fill="#4263d7"/></svg>
<span class="t" style="left:1680.90px;top:1129px;font-size:16.5px;line-height:18px;letter-spacing:0.053px;-webkit-text-stroke:0.25px #000;">ingredients</span>
<i class="hd" style="left:1656.8px;top:1135.9px"></i>
<i class="hd" style="left:1858.8px;top:1135.9px"></i>
<svg style="position:absolute;left:1668px;top:1164.2px;overflow:visible;" width="12" height="11.6" viewBox="0 0 12 11.6"><path d="M0 2.9H6.8V0L12 5.8L6.8 11.6V8.7H0Z" fill="#4263d7"/></svg>
<span class="t" style="left:1680.90px;top:1159px;font-size:16.5px;line-height:18px;letter-spacing:0.432px;-webkit-text-stroke:0.25px #000;">ports</span>
<i class="hd" style="left:1656.8px;top:1165.9px"></i>
<i class="hd" style="left:1858.8px;top:1165.9px"></i>
<svg style="position:absolute;left:1668px;top:1194.2px;overflow:visible;" width="12" height="11.6" viewBox="0 0 12 11.6"><path d="M0 2.9H6.8V0L12 5.8L6.8 11.6V8.7H0Z" fill="#4263d7"/></svg>
<span class="t" style="left:1680.90px;top:1189px;font-size:16.5px;line-height:18px;letter-spacing:0.432px;-webkit-text-stroke:0.25px #000;">ports</span>
<i class="hd" style="left:1656.8px;top:1195.9px"></i>
<i class="hd" style="left:1858.8px;top:1195.9px"></i>
<svg style="position:absolute;left:1668px;top:1224.2px;overflow:visible;" width="12" height="11.6" viewBox="0 0 12 11.6"><path d="M0 2.9H6.8V0L12 5.8L6.8 11.6V8.7H0Z" fill="#4263d7"/></svg>
<span class="t" style="left:1680.90px;top:1219px;font-size:16.5px;line-height:18px;letter-spacing:0.253px;-webkit-text-stroke:0.25px #000;">pos</span>
<i class="hd" style="left:1656.8px;top:1225.9px"></i>
<i class="hd" style="left:1858.8px;top:1225.9px"></i>
<svg style="position:absolute;left:1668px;top:1254.2px;overflow:visible;" width="12" height="11.6" viewBox="0 0 12 11.6"><path d="M0 2.9H6.8V0L12 5.8L6.8 11.6V8.7H0Z" fill="#4263d7"/></svg>
<span class="t" style="left:1680.90px;top:1249px;font-size:16.5px;line-height:18px;letter-spacing:-0.103px;-webkit-text-stroke:0.25px #000;">ships</span>
<i class="hd" style="left:1656.8px;top:1255.9px"></i>
<i class="hd" style="left:1858.8px;top:1255.9px"></i>
<svg style="position:absolute;left:1668px;top:1284.2px;overflow:visible;" width="12" height="11.6" viewBox="0 0 12 11.6"><path d="M0 2.9H6.8V0L12 5.8L6.8 11.6V8.7H0Z" fill="#4263d7"/></svg>
<span class="t" style="left:1680.90px;top:1279px;font-size:16.5px;line-height:18px;letter-spacing:0.304px;-webkit-text-stroke:0.25px #000;">products</span>
<i class="hd" style="left:1656.8px;top:1285.9px"></i>
<i class="hd" style="left:1858.8px;top:1285.9px"></i>
<svg style="position:absolute;left:1668px;top:1314.2px;overflow:visible;" width="12" height="11.6" viewBox="0 0 12 11.6"><path d="M0 2.9H6.8V0L12 5.8L6.8 11.6V8.7H0Z" fill="#4263d7"/></svg>
<span class="t" style="left:1680.90px;top:1309px;font-size:16.5px;line-height:18px;letter-spacing:0.304px;-webkit-text-stroke:0.25px #000;">products</span>
<i class="hd" style="left:1656.8px;top:1315.9px"></i>
<i class="hd" style="left:1858.8px;top:1315.9px"></i>
<svg style="position:absolute;left:1668px;top:1344.2px;overflow:visible;" width="12" height="11.6" viewBox="0 0 12 11.6"><path d="M0 2.9H6.8V0L12 5.8L6.8 11.6V8.7H0Z" fill="#4263d7"/></svg>
<span class="t" style="left:1680.90px;top:1339px;font-size:16.5px;line-height:18px;letter-spacing:0.304px;-webkit-text-stroke:0.25px #000;">products</span>
<i class="hd" style="left:1656.8px;top:1345.9px"></i>
<i class="hd" style="left:1858.8px;top:1345.9px"></i>
<svg style="position:absolute;left:1668px;top:1374.2px;overflow:visible;" width="12" height="11.6" viewBox="0 0 12 11.6"><path d="M0 2.9H6.8V0L12 5.8L6.8 11.6V8.7H0Z" fill="#4263d7"/></svg>
<span class="t" style="left:1680.90px;top:1369px;font-size:16.5px;line-height:18px;letter-spacing:0.253px;-webkit-text-stroke:0.25px #000;">pos</span>
<i class="hd" style="left:1656.8px;top:1375.9px"></i>
<i class="hd" style="left:1858.8px;top:1375.9px"></i>
<div class="nb" style="left:2050px;top:392px;height:211.4px;border-bottom-color:#27780f"></div>
<div class="nh" style="left:2050px;top:353px;border-color:#27780f"></div>
<svg style="position:absolute;left:2061.7px;top:363.5px;overflow:visible;" width="15" height="19.2" viewBox="0 0 15 19.2"><rect x="0" y="0.00" width="15" height="1.7" fill="#000"/><rect x="0" y="3.47" width="15" height="1.7" fill="#000"/><rect x="0" y="6.94" width="15" height="1.7" fill="#000"/><rect x="0" y="10.41" width="15" height="1.7" fill="#000"/><rect x="0" y="13.88" width="15" height="1.7" fill="#000"/><rect x="0" y="17.35" width="15" height="1.7" fill="#000"/></svg>
<svg style="position:absolute;left:0;top:0;overflow:visible" width="1" height="1"><path d="M2128.05 366.15L2134.30 369.48L2134.30 376.12L2128.05 379.45L2121.80 376.12L2121.80 369.48ZM2121.80 369.48L2128.05 372.80L2134.30 369.48M2128.05 372.80L2128.05 379.45" fill="none" stroke="#3b82f6" stroke-width="1.1" stroke-linejoin="round"/></svg>
<span class="t" style="left:2140.28px;top:364px;font-size:16.8px;line-height:19px;letter-spacing:-0.167px;font-weight:700;-webkit-text-stroke:0.45px #000;">allergen</span>
<svg style="position:absolute;left:2058px;top:402px;overflow:visible;" width="12" height="12" viewBox="0 0 12 12"><rect x="0" y="0" width="12" height="12" rx="3.4" fill="#c13bcb"/></svg>
<span class="t" style="left:2073.30px;top:399px;font-size:16.5px;line-height:18px;letter-spacing:0.014px;-webkit-text-stroke:0.25px #000;">Root fields</span>
<i class="hd" style="left:2046.8px;top:405.9px"></i>
<svg style="position:absolute;left:2058.8px;top:432px;overflow:visible;" width="14" height="12" viewBox="0 0 14 12"><path d="M0.6 3.6V10.4Q0.6 11.5 1.7 11.5H12.3Q13.4 11.5 13.4 10.4V3.4Q13.4 2.3 12.3 2.3H6.6L5.2 0.6H1.7Q0.6 0.6 0.6 1.7Z" fill="none" stroke="#3b82f6" stroke-width="1.1" stroke-linejoin="round"/><path d="M0.6 4.6H13.4" stroke="#3b82f6" stroke-width="1.1"/></svg>
<span class="t" style="left:2075.60px;top:429px;font-size:16.5px;line-height:18px;letter-spacing:-0.132px;-webkit-text-stroke:0.25px #000;">name</span>
<i class="hd" style="left:2046.8px;top:435.9px"></i>
<svg style="position:absolute;left:2058.8px;top:462px;overflow:visible;" width="14" height="12" viewBox="0 0 14 12"><path d="M0.6 3.6V10.4Q0.6 11.5 1.7 11.5H12.3Q13.4 11.5 13.4 10.4V3.4Q13.4 2.3 12.3 2.3H6.6L5.2 0.6H1.7Q0.6 0.6 0.6 1.7Z" fill="none" stroke="#3b82f6" stroke-width="1.1" stroke-linejoin="round"/><path d="M0.6 4.6H13.4" stroke="#3b82f6" stroke-width="1.1"/></svg>
<span class="t" style="left:2075.60px;top:459px;font-size:16.5px;line-height:18px;letter-spacing:-0.238px;-webkit-text-stroke:0.25px #000;">examples</span>
<i class="hd" style="left:2046.8px;top:465.9px"></i>
<svg style="position:absolute;left:2078.8px;top:491.2px;overflow:visible;" width="14" height="13" viewBox="0 0 14 13"><path d="M0.6 4.4V11.2Q0.6 12.3 1.7 12.3H12.3Q13.4 12.3 13.4 11.2V4.2Q13.4 3.1 12.3 3.1H6.6L5.2 1.4H1.7Q0.6 1.4 0.6 2.5Z" fill="none" stroke="#3b82f6" stroke-width="1.1" stroke-linejoin="round"/><path d="M0.6 5.6H13.4M2.6 7.2V5.6M6.4 0.5H11.2Q13.4 0.9 13.4 3.6M8.6 1.8Q11.4 2.2 12.2 3.2" fill="none" stroke="#3b82f6" stroke-width="1"/></svg>
<span class="t" style="left:2095.80px;top:489px;font-size:16.5px;line-height:18px;letter-spacing:0.900px;-webkit-text-stroke:0.25px #000;">fr</span>
<i class="hd" style="left:2046.8px;top:495.9px"></i>
<svg style="position:absolute;left:2078.8px;top:521.2px;overflow:visible;" width="14" height="13" viewBox="0 0 14 13"><path d="M0.6 4.4V11.2Q0.6 12.3 1.7 12.3H12.3Q13.4 12.3 13.4 11.2V4.2Q13.4 3.1 12.3 3.1H6.6L5.2 1.4H1.7Q0.6 1.4 0.6 2.5Z" fill="none" stroke="#3b82f6" stroke-width="1.1" stroke-linejoin="round"/><path d="M0.6 5.6H13.4M2.6 7.2V5.6M6.4 0.5H11.2Q13.4 0.9 13.4 3.6M8.6 1.8Q11.4 2.2 12.2 3.2" fill="none" stroke="#3b82f6" stroke-width="1"/></svg>
<span class="t" style="left:2095.80px;top:519px;font-size:16.5px;line-height:18px;letter-spacing:0.069px;-webkit-text-stroke:0.25px #000;">en</span>
<i class="hd" style="left:2046.8px;top:525.9px"></i>
<svg style="position:absolute;left:2078.8px;top:551.2px;overflow:visible;" width="14" height="13" viewBox="0 0 14 13"><path d="M0.6 4.4V11.2Q0.6 12.3 1.7 12.3H12.3Q13.4 12.3 13.4 11.2V4.2Q13.4 3.1 12.3 3.1H6.6L5.2 1.4H1.7Q0.6 1.4 0.6 2.5Z" fill="none" stroke="#3b82f6" stroke-width="1.1" stroke-linejoin="round"/><path d="M0.6 5.6H13.4M2.6 7.2V5.6M6.4 0.5H11.2Q13.4 0.9 13.4 3.6M8.6 1.8Q11.4 2.2 12.2 3.2" fill="none" stroke="#3b82f6" stroke-width="1"/></svg>
<span class="t" style="left:2095.80px;top:549px;font-size:16.5px;line-height:18px;letter-spacing:0.900px;-webkit-text-stroke:0.25px #000;">it</span>
<i class="hd" style="left:2046.8px;top:555.9px"></i>
<svg style="position:absolute;left:2058.8px;top:582px;overflow:visible;" width="14" height="12" viewBox="0 0 14 12"><path d="M0.6 3.6V10.4Q0.6 11.5 1.7 11.5H12.3Q13.4 11.5 13.4 10.4V3.4Q13.4 2.3 12.3 2.3H6.6L5.2 0.6H1.7Q0.6 0.6 0.6 1.7Z" fill="none" stroke="#3b82f6" stroke-width="1.1" stroke-linejoin="round"/><path d="M0.6 4.6H13.4" stroke="#3b82f6" stroke-width="1.1"/></svg>
<span class="t" style="left:2075.60px;top:579px;font-size:16.5px;line-height:18px;letter-spacing:0.187px;-webkit-text-stroke:0.25px #000;">risk</span>
<i class="hd" style="left:2046.8px;top:585.9px"></i>
<div class="nb" style="left:2050px;top:722px;height:91.4px;border-bottom-color:#27780f"></div>
<div class="nh" style="left:2050px;top:683px;border-color:#27780f"></div>
<svg style="position:absolute;left:2061.7px;top:693.5px;overflow:visible;" width="15" height="19.2" viewBox="0 0 15 19.2"><rect x="0" y="0.00" width="15" height="1.7" fill="#000"/><rect x="0" y="3.47" width="15" height="1.7" fill="#000"/><rect x="0" y="6.94" width="15" height="1.7" fill="#000"/><rect x="0" y="10.41" width="15" height="1.7" fill="#000"/><rect x="0" y="13.88" width="15" height="1.7" fill="#000"/><rect x="0" y="17.35" width="15" height="1.7" fill="#000"/></svg>
<svg style="position:absolute;left:0;top:0;overflow:visible" width="1" height="1"><path d="M2113.40 696.15L2119.65 699.47L2119.65 706.12L2113.40 709.45L2107.15 706.12L2107.15 699.47ZM2107.15 699.47L2113.40 702.80L2119.65 699.47M2113.40 702.80L2113.40 709.45" fill="none" stroke="#3b82f6" stroke-width="1.1" stroke-linejoin="round"/></svg>
<span class="t" style="left:2125.02px;top:694px;font-size:16.8px;line-height:19px;letter-spacing:-0.153px;font-weight:700;-webkit-text-stroke:0.45px #000;">pointOfSale</span>
<svg style="position:absolute;left:2058px;top:732px;overflow:visible;" width="12" height="12" viewBox="0 0 12 12"><rect x="0" y="0" width="12" height="12" rx="3.4" fill="#c13bcb"/></svg>
<span class="t" style="left:2073.30px;top:729px;font-size:16.5px;line-height:18px;letter-spacing:0.014px;-webkit-text-stroke:0.25px #000;">Root fields</span>
<i class="hd" style="left:2046.8px;top:735.9px"></i>
<svg style="position:absolute;left:2058.8px;top:762px;overflow:visible;" width="14" height="12" viewBox="0 0 14 12"><path d="M0.6 3.6V10.4Q0.6 11.5 1.7 11.5H12.3Q13.4 11.5 13.4 10.4V3.4Q13.4 2.3 12.3 2.3H6.6L5.2 0.6H1.7Q0.6 0.6 0.6 1.7Z" fill="none" stroke="#3b82f6" stroke-width="1.1" stroke-linejoin="round"/><path d="M0.6 4.6H13.4" stroke="#3b82f6" stroke-width="1.1"/></svg>
<span class="t" style="left:2075.60px;top:759px;font-size:16.5px;line-height:18px;letter-spacing:0.011px;-webkit-text-stroke:0.25px #000;">ship</span>
<i class="hd" style="left:2046.8px;top:765.9px"></i>
<svg style="position:absolute;left:2058.8px;top:792px;overflow:visible;" width="14" height="12" viewBox="0 0 14 12"><path d="M0.6 3.6V10.4Q0.6 11.5 1.7 11.5H12.3Q13.4 11.5 13.4 10.4V3.4Q13.4 2.3 12.3 2.3H6.6L5.2 0.6H1.7Q0.6 0.6 0.6 1.7Z" fill="none" stroke="#3b82f6" stroke-width="1.1" stroke-linejoin="round"/><path d="M0.6 4.6H13.4" stroke="#3b82f6" stroke-width="1.1"/></svg>
<span class="t" style="left:2075.60px;top:789px;font-size:16.5px;line-height:18px;letter-spacing:0.244px;-webkit-text-stroke:0.25px #000;">brand</span>
<i class="hd" style="left:2046.8px;top:795.9px"></i>
<div class="nb" style="left:2050px;top:932px;height:541.4px;border-bottom-color:#27780f"></div>
<div class="nh" style="left:2050px;top:893px;border-color:#27780f"></div>
<svg style="position:absolute;left:2061.7px;top:903.5px;overflow:visible;" width="15" height="19.2" viewBox="0 0 15 19.2"><rect x="0" y="0.00" width="15" height="1.7" fill="#000"/><rect x="0" y="3.47" width="15" height="1.7" fill="#000"/><rect x="0" y="6.94" width="15" height="1.7" fill="#000"/><rect x="0" y="10.41" width="15" height="1.7" fill="#000"/><rect x="0" y="13.88" width="15" height="1.7" fill="#000"/><rect x="0" y="17.35" width="15" height="1.7" fill="#000"/></svg>
<svg style="position:absolute;left:0;top:0;overflow:visible" width="1" height="1"><path d="M2128.75 906.15L2135.00 909.47L2135.00 916.12L2128.75 919.45L2122.50 916.12L2122.50 909.47ZM2122.50 909.47L2128.75 912.80L2135.00 909.47M2128.75 912.80L2128.75 919.45" fill="none" stroke="#3b82f6" stroke-width="1.1" stroke-linejoin="round"/></svg>
<span class="t" style="left:2140.37px;top:904px;font-size:16.8px;line-height:19px;letter-spacing:-0.149px;font-weight:700;-webkit-text-stroke:0.45px #000;">product</span>
<svg style="position:absolute;left:2058px;top:942px;overflow:visible;" width="12" height="12" viewBox="0 0 12 12"><rect x="0" y="0" width="12" height="12" rx="3.4" fill="#c13bcb"/></svg>
<span class="t" style="left:2073.30px;top:939px;font-size:16.5px;line-height:18px;letter-spacing:0.014px;-webkit-text-stroke:0.25px #000;">Root fields</span>
<i class="hd" style="left:2046.8px;top:945.9px"></i>
<svg style="position:absolute;left:2058.8px;top:971.2px;overflow:visible;" width="14" height="13" viewBox="0 0 14 13"><path d="M0.6 4.4V11.2Q0.6 12.3 1.7 12.3H12.3Q13.4 12.3 13.4 11.2V4.2Q13.4 3.1 12.3 3.1H6.6L5.2 1.4H1.7Q0.6 1.4 0.6 2.5Z" fill="none" stroke="#3b82f6" stroke-width="1.1" stroke-linejoin="round"/><path d="M0.6 5.6H13.4M2.6 7.2V5.6M6.4 0.5H11.2Q13.4 0.9 13.4 3.6M8.6 1.8Q11.4 2.2 12.2 3.2" fill="none" stroke="#3b82f6" stroke-width="1"/></svg>
<span class="t" style="left:2075.80px;top:969px;font-size:16.5px;line-height:18px;letter-spacing:-0.139px;-webkit-text-stroke:0.25px #000;">allergens</span>
<i class="hd" style="left:2046.8px;top:975.9px"></i>
<svg style="position:absolute;left:2078.8px;top:1002px;overflow:visible;" width="14" height="12" viewBox="0 0 14 12"><path d="M0.6 3.6V10.4Q0.6 11.5 1.7 11.5H12.3Q13.4 11.5 13.4 10.4V3.4Q13.4 2.3 12.3 2.3H6.6L5.2 0.6H1.7Q0.6 0.6 0.6 1.7Z" fill="none" stroke="#3b82f6" stroke-width="1.1" stroke-linejoin="round"/><path d="M0.6 4.6H13.4" stroke="#3b82f6" stroke-width="1.1"/></svg>
<span class="t" style="left:2095.60px;top:999px;font-size:16.5px;line-height:18px;letter-spacing:-0.132px;-webkit-text-stroke:0.25px #000;">name</span>
<i class="hd" style="left:2046.8px;top:1005.9px"></i>
<svg style="position:absolute;left:2058.8px;top:1032px;overflow:visible;" width="14" height="12" viewBox="0 0 14 12"><path d="M0.6 3.6V10.4Q0.6 11.5 1.7 11.5H12.3Q13.4 11.5 13.4 10.4V3.4Q13.4 2.3 12.3 2.3H6.6L5.2 0.6H1.7Q0.6 0.6 0.6 1.7Z" fill="none" stroke="#3b82f6" stroke-width="1.1" stroke-linejoin="round"/><path d="M0.6 4.6H13.4" stroke="#3b82f6" stroke-width="1.1"/></svg>
<span class="t" style="left:2075.60px;top:1029px;font-size:16.5px;line-height:18px;letter-spacing:0.053px;-webkit-text-stroke:0.25px #000;">ingredients</span>
<i class="hd" style="left:2046.8px;top:1035.9px"></i>
<svg style="position:absolute;left:2078.8px;top:1061.2px;overflow:visible;" width="14" height="13" viewBox="0 0 14 13"><path d="M0.6 4.4V11.2Q0.6 12.3 1.7 12.3H12.3Q13.4 12.3 13.4 11.2V4.2Q13.4 3.1 12.3 3.1H6.6L5.2 1.4H1.7Q0.6 1.4 0.6 2.5Z" fill="none" stroke="#3b82f6" stroke-width="1.1" stroke-linejoin="round"/><path d="M0.6 5.6H13.4M2.6 7.2V5.6M6.4 0.5H11.2Q13.4 0.9 13.4 3.6M8.6 1.8Q11.4 2.2 12.2 3.2" fill="none" stroke="#3b82f6" stroke-width="1"/></svg>
<span class="t" style="left:2095.80px;top:1059px;font-size:16.5px;line-height:18px;letter-spacing:0.900px;-webkit-text-stroke:0.25px #000;">fr</span>
<i class="hd" style="left:2046.8px;top:1065.9px"></i>
<svg style="position:absolute;left:2078.8px;top:1091.2px;overflow:visible;" width="14" height="13" viewBox="0 0 14 13"><path d="M0.6 4.4V11.2Q0.6 12.3 1.7 12.3H12.3Q13.4 12.3 13.4 11.2V4.2Q13.4 3.1 12.3 3.1H6.6L5.2 1.4H1.7Q0.6 1.4 0.6 2.5Z" fill="none" stroke="#3b82f6" stroke-width="1.1" stroke-linejoin="round"/><path d="M0.6 5.6H13.4M2.6 7.2V5.6M6.4 0.5H11.2Q13.4 0.9 13.4 3.6M8.6 1.8Q11.4 2.2 12.2 3.2" fill="none" stroke="#3b82f6" stroke-width="1"/></svg>
<span class="t" style="left:2095.80px;top:1089px;font-size:16.5px;line-height:18px;letter-spacing:0.900px;-webkit-text-stroke:0.25px #000;">it</span>
<i class="hd" style="left:2046.8px;top:1095.9px"></i>
<svg style="position:absolute;left:2078.8px;top:1121.2px;overflow:visible;" width="14" height="13" viewBox="0 0 14 13"><path d="M0.6 4.4V11.2Q0.6 12.3 1.7 12.3H12.3Q13.4 12.3 13.4 11.2V4.2Q13.4 3.1 12.3 3.1H6.6L5.2 1.4H1.7Q0.6 1.4 0.6 2.5Z" fill="none" stroke="#3b82f6" stroke-width="1.1" stroke-linejoin="round"/><path d="M0.6 5.6H13.4M2.6 7.2V5.6M6.4 0.5H11.2Q13.4 0.9 13.4 3.6M8.6 1.8Q11.4 2.2 12.2 3.2" fill="none" stroke="#3b82f6" stroke-width="1"/></svg>
<span class="t" style="left:2095.80px;top:1119px;font-size:16.5px;line-height:18px;letter-spacing:0.069px;-webkit-text-stroke:0.25px #000;">en</span>
<i class="hd" style="left:2046.8px;top:1125.9px"></i>
<svg style="position:absolute;left:2078.8px;top:1151.2px;overflow:visible;" width="14" height="13" viewBox="0 0 14 13"><path d="M0.6 4.4V11.2Q0.6 12.3 1.7 12.3H12.3Q13.4 12.3 13.4 11.2V4.2Q13.4 3.1 12.3 3.1H6.6L5.2 1.4H1.7Q0.6 1.4 0.6 2.5Z" fill="none" stroke="#3b82f6" stroke-width="1.1" stroke-linejoin="round"/><path d="M0.6 5.6H13.4M2.6 7.2V5.6M6.4 0.5H11.2Q13.4 0.9 13.4 3.6M8.6 1.8Q11.4 2.2 12.2 3.2" fill="none" stroke="#3b82f6" stroke-width="1"/></svg>
<span class="t" style="left:2095.80px;top:1149px;font-size:16.5px;line-height:18px;letter-spacing:0.523px;-webkit-text-stroke:0.25px #000;">de</span>
<i class="hd" style="left:2046.8px;top:1155.9px"></i>
<svg style="position:absolute;left:2058.8px;top:1182px;overflow:visible;" width="14" height="12" viewBox="0 0 14 12"><path d="M0.6 3.6V10.4Q0.6 11.5 1.7 11.5H12.3Q13.4 11.5 13.4 10.4V3.4Q13.4 2.3 12.3 2.3H6.6L5.2 0.6H1.7Q0.6 0.6 0.6 1.7Z" fill="none" stroke="#3b82f6" stroke-width="1.1" stroke-linejoin="round"/><path d="M0.6 4.6H13.4" stroke="#3b82f6" stroke-width="1.1"/></svg>
<span class="t" style="left:2075.60px;top:1179px;font-size:16.5px;line-height:18px;letter-spacing:0.232px;-webkit-text-stroke:0.25px #000;">description</span>
<i class="hd" style="left:2046.8px;top:1185.9px"></i>
<svg style="position:absolute;left:2058.8px;top:1211.2px;overflow:visible;" width="14" height="13" viewBox="0 0 14 13"><path d="M0.6 4.4V11.2Q0.6 12.3 1.7 12.3H12.3Q13.4 12.3 13.4 11.2V4.2Q13.4 3.1 12.3 3.1H6.6L5.2 1.4H1.7Q0.6 1.4 0.6 2.5Z" fill="none" stroke="#3b82f6" stroke-width="1.1" stroke-linejoin="round"/><path d="M0.6 5.6H13.4M2.6 7.2V5.6M6.4 0.5H11.2Q13.4 0.9 13.4 3.6M8.6 1.8Q11.4 2.2 12.2 3.2" fill="none" stroke="#3b82f6" stroke-width="1"/></svg>
<span class="t" style="left:2075.80px;top:1209px;font-size:16.5px;line-height:18px;letter-spacing:0.128px;-webkit-text-stroke:0.25px #000;">recipe</span>
<i class="hd" style="left:2046.8px;top:1215.9px"></i>
<svg style="position:absolute;left:2058.8px;top:1241.2px;overflow:visible;" width="14" height="13" viewBox="0 0 14 13"><path d="M0.6 4.4V11.2Q0.6 12.3 1.7 12.3H12.3Q13.4 12.3 13.4 11.2V4.2Q13.4 3.1 12.3 3.1H6.6L5.2 1.4H1.7Q0.6 1.4 0.6 2.5Z" fill="none" stroke="#3b82f6" stroke-width="1.1" stroke-linejoin="round"/><path d="M0.6 5.6H13.4M2.6 7.2V5.6M6.4 0.5H11.2Q13.4 0.9 13.4 3.6M8.6 1.8Q11.4 2.2 12.2 3.2" fill="none" stroke="#3b82f6" stroke-width="1"/></svg>
<span class="t" style="left:2075.80px;top:1239px;font-size:16.5px;line-height:18px;letter-spacing:0.178px;-webkit-text-stroke:0.25px #000;">composition</span>
<i class="hd" style="left:2046.8px;top:1245.9px"></i>
<svg style="position:absolute;left:2078.8px;top:1271.2px;overflow:visible;" width="14" height="13" viewBox="0 0 14 13"><path d="M0.6 4.4V11.2Q0.6 12.3 1.7 12.3H12.3Q13.4 12.3 13.4 11.2V4.2Q13.4 3.1 12.3 3.1H6.6L5.2 1.4H1.7Q0.6 1.4 0.6 2.5Z" fill="none" stroke="#3b82f6" stroke-width="1.1" stroke-linejoin="round"/><path d="M0.6 5.6H13.4M2.6 7.2V5.6M6.4 0.5H11.2Q13.4 0.9 13.4 3.6M8.6 1.8Q11.4 2.2 12.2 3.2" fill="none" stroke="#3b82f6" stroke-width="1"/></svg>
<span class="t" style="left:2095.80px;top:1269px;font-size:16.5px;line-height:18px;letter-spacing:0.122px;-webkit-text-stroke:0.25px #000;">productGroups</span>
<i class="hd" style="left:2046.8px;top:1275.9px"></i>
<svg style="position:absolute;left:2098.8px;top:1302px;overflow:visible;" width="14" height="12" viewBox="0 0 14 12"><path d="M0.6 3.6V10.4Q0.6 11.5 1.7 11.5H12.3Q13.4 11.5 13.4 10.4V3.4Q13.4 2.3 12.3 2.3H6.6L5.2 0.6H1.7Q0.6 0.6 0.6 1.7Z" fill="none" stroke="#3b82f6" stroke-width="1.1" stroke-linejoin="round"/><path d="M0.6 4.6H13.4" stroke="#3b82f6" stroke-width="1.1"/></svg>
<span class="t" style="left:2115.60px;top:1299px;font-size:16.5px;line-height:18px;letter-spacing:-0.132px;-webkit-text-stroke:0.25px #000;">name</span>
<i class="hd" style="left:2046.8px;top:1305.9px"></i>
<svg style="position:absolute;left:2098.8px;top:1331.2px;overflow:visible;" width="14" height="13" viewBox="0 0 14 13"><path d="M0.6 4.4V11.2Q0.6 12.3 1.7 12.3H12.3Q13.4 12.3 13.4 11.2V4.2Q13.4 3.1 12.3 3.1H6.6L5.2 1.4H1.7Q0.6 1.4 0.6 2.5Z" fill="none" stroke="#3b82f6" stroke-width="1.1" stroke-linejoin="round"/><path d="M0.6 5.6H13.4M2.6 7.2V5.6M6.4 0.5H11.2Q13.4 0.9 13.4 3.6M8.6 1.8Q11.4 2.2 12.2 3.2" fill="none" stroke="#3b82f6" stroke-width="1"/></svg>
<span class="t" style="left:2115.80px;top:1329px;font-size:16.5px;line-height:18px;letter-spacing:0.304px;-webkit-text-stroke:0.25px #000;">products</span>
<i class="hd" style="left:2046.8px;top:1335.9px"></i>
<svg style="position:absolute;left:2058.8px;top:1361.2px;overflow:visible;" width="14" height="13" viewBox="0 0 14 13"><path d="M0.6 4.4V11.2Q0.6 12.3 1.7 12.3H12.3Q13.4 12.3 13.4 11.2V4.2Q13.4 3.1 12.3 3.1H6.6L5.2 1.4H1.7Q0.6 1.4 0.6 2.5Z" fill="none" stroke="#3b82f6" stroke-width="1.1" stroke-linejoin="round"/><path d="M0.6 5.6H13.4M2.6 7.2V5.6M6.4 0.5H11.2Q13.4 0.9 13.4 3.6M8.6 1.8Q11.4 2.2 12.2 3.2" fill="none" stroke="#3b82f6" stroke-width="1"/></svg>
<span class="t" style="left:2075.80px;top:1359px;font-size:16.5px;line-height:18px;letter-spacing:0.047px;-webkit-text-stroke:0.25px #000;">categories</span>
<i class="hd" style="left:2046.8px;top:1365.9px"></i>
<svg style="position:absolute;left:2078.8px;top:1392px;overflow:visible;" width="14" height="12" viewBox="0 0 14 12"><path d="M0.6 3.6V10.4Q0.6 11.5 1.7 11.5H12.3Q13.4 11.5 13.4 10.4V3.4Q13.4 2.3 12.3 2.3H6.6L5.2 0.6H1.7Q0.6 0.6 0.6 1.7Z" fill="none" stroke="#3b82f6" stroke-width="1.1" stroke-linejoin="round"/><path d="M0.6 4.6H13.4" stroke="#3b82f6" stroke-width="1.1"/></svg>
<span class="t" style="left:2095.60px;top:1389px;font-size:16.5px;line-height:18px;letter-spacing:-0.132px;-webkit-text-stroke:0.25px #000;">name</span>
<i class="hd" style="left:2046.8px;top:1395.9px"></i>
<svg style="position:absolute;left:2078.8px;top:1422px;overflow:visible;" width="14" height="12" viewBox="0 0 14 12"><path d="M0.6 3.6V10.4Q0.6 11.5 1.7 11.5H12.3Q13.4 11.5 13.4 10.4V3.4Q13.4 2.3 12.3 2.3H6.6L5.2 0.6H1.7Q0.6 0.6 0.6 1.7Z" fill="none" stroke="#3b82f6" stroke-width="1.1" stroke-linejoin="round"/><path d="M0.6 4.6H13.4" stroke="#3b82f6" stroke-width="1.1"/></svg>
<span class="t" style="left:2095.60px;top:1419px;font-size:16.5px;line-height:18px;letter-spacing:0.232px;-webkit-text-stroke:0.25px #000;">description</span>
<i class="hd" style="left:2046.8px;top:1425.9px"></i>
<svg style="position:absolute;left:2058.8px;top:1452px;overflow:visible;" width="14" height="12" viewBox="0 0 14 12"><path d="M0.6 3.6V10.4Q0.6 11.5 1.7 11.5H12.3Q13.4 11.5 13.4 10.4V3.4Q13.4 2.3 12.3 2.3H6.6L5.2 0.6H1.7Q0.6 0.6 0.6 1.7Z" fill="none" stroke="#3b82f6" stroke-width="1.1" stroke-linejoin="round"/><path d="M0.6 4.6H13.4" stroke="#3b82f6" stroke-width="1.1"/></svg>
<span class="t" style="left:2075.60px;top:1449px;font-size:16.5px;line-height:18px;letter-spacing:-0.132px;-webkit-text-stroke:0.25px #000;">name</span>
<i class="hd" style="left:2046.8px;top:1455.9px"></i>
<div class="nb" style="left:2050px;top:1592px;height:61.4px;border-bottom-color:#27780f"></div>
<div class="nh" style="left:2050px;top:1553px;border-color:#27780f"></div>
<svg style="position:absolute;left:2061.7px;top:1563.5px;overflow:visible;" width="15" height="19.2" viewBox="0 0 15 19.2"><rect x="0" y="0.00" width="15" height="1.7" fill="#000"/><rect x="0" y="3.47" width="15" height="1.7" fill="#000"/><rect x="0" y="6.94" width="15" height="1.7" fill="#000"/><rect x="0" y="10.41" width="15" height="1.7" fill="#000"/><rect x="0" y="13.88" width="15" height="1.7" fill="#000"/><rect x="0" y="17.35" width="15" height="1.7" fill="#000"/></svg>
<svg style="position:absolute;left:0;top:0;overflow:visible" width="1" height="1"><path d="M2119.75 1566.15L2126.00 1569.47L2126.00 1576.12L2119.75 1579.45L2113.50 1576.12L2113.50 1569.47ZM2113.50 1569.47L2119.75 1572.80L2126.00 1569.47M2119.75 1572.80L2119.75 1579.45" fill="none" stroke="#3b82f6" stroke-width="1.1" stroke-linejoin="round"/></svg>
<span class="t" style="left:2131.30px;top:1564px;font-size:16.8px;line-height:19px;letter-spacing:-0.165px;font-weight:700;-webkit-text-stroke:0.45px #000;">ingredient</span>
<svg style="position:absolute;left:2058px;top:1602px;overflow:visible;" width="12" height="12" viewBox="0 0 12 12"><rect x="0" y="0" width="12" height="12" rx="3.4" fill="#c13bcb"/></svg>
<span class="t" style="left:2073.30px;top:1599px;font-size:16.5px;line-height:18px;letter-spacing:0.014px;-webkit-text-stroke:0.25px #000;">Root fields</span>
<i class="hd" style="left:2046.8px;top:1605.9px"></i>
<svg style="position:absolute;left:2058.8px;top:1632px;overflow:visible;" width="14" height="12" viewBox="0 0 14 12"><path d="M0.6 3.6V10.4Q0.6 11.5 1.7 11.5H12.3Q13.4 11.5 13.4 10.4V3.4Q13.4 2.3 12.3 2.3H6.6L5.2 0.6H1.7Q0.6 0.6 0.6 1.7Z" fill="none" stroke="#3b82f6" stroke-width="1.1" stroke-linejoin="round"/><path d="M0.6 4.6H13.4" stroke="#3b82f6" stroke-width="1.1"/></svg>
<span class="t" style="left:2075.60px;top:1629px;font-size:16.5px;line-height:18px;letter-spacing:-0.132px;-webkit-text-stroke:0.25px #000;">name</span>
<i class="hd" style="left:2046.8px;top:1635.9px"></i>
<div style="position:absolute;left:958px;top:1372px;width:52px;height:214px;background:#fff;box-shadow:0 0 4px 2px rgba(0,0,0,.08);"></div>
<div style="position:absolute;left:958px;top:1424px;width:52px;height:2px;background:#eee;"></div>
<div style="position:absolute;left:958px;top:1478px;width:52px;height:2px;background:#eee;"></div>
<div style="position:absolute;left:958px;top:1532px;width:52px;height:2px;background:#eee;"></div>
<svg style="position:absolute;left:972px;top:1386px;overflow:visible;" width="24" height="24" viewBox="0 0 32 32"><path d="M32 18.133H18.133V32h-4.266V18.133H0v-4.266h13.867V0h4.266v13.867H32z"/></svg>
<svg style="position:absolute;left:972px;top:1450.2px;overflow:visible;" width="24" height="3.75" viewBox="0 0 32 5"><path d="M0 0h32v4.2H0z" fill="#999"/></svg>
<svg style="position:absolute;left:972px;top:1494.8px;overflow:visible;" width="24" height="22.5" viewBox="0 0 32 30"><path d="M3.692 4.63c0-.53.4-.938.939-.938h5.215V0H4.708C2.13 0 0 2.054 0 4.63v5.216h3.692V4.631zM27.354 0h-5.2v3.692h5.17c.53 0 .984.4.984.939v5.215H32V4.631A4.624 4.624 0 0027.354 0zm.954 24.83c0 .532-.4.94-.939.94h-5.215v3.768h5.215c2.577 0 4.631-2.13 4.631-4.707v-5.139h-3.692v5.139zm-23.677.94c-.531 0-.939-.4-.939-.94v-5.138H0v5.139c0 2.577 2.13 4.707 4.708 4.707h5.138V25.77H4.631z"/></svg>
<svg style="position:absolute;left:974.6px;top:1548px;overflow:visible;" width="18.75" height="24" viewBox="0 0 25 32"><path d="M21.333 10.667H19.81V7.619C19.81 3.429 16.38 0 12.19 0c-4.114 1.828-1.37 2.133.305 2.438 1.676.305 4.42 2.59 4.42 5.181v3.048H3.047A3.056 3.056 0 000 13.714v15.238A3.056 3.056 0 003.048 32h18.285a3.056 3.056 0 003.048-3.048V13.714a3.056 3.056 0 00-3.048-3.047zM12.19 24.533a3.056 3.056 0 01-3.047-3.047 3.056 3.056 0 013.047-3.048 3.056 3.056 0 013.048 3.048 3.056 3.056 0 01-3.048 3.047z"/></svg>
<div style="position:absolute;left:2747px;top:1580px;width:117px;height:38px;background:rgba(255,255,255,.5);"></div>
<span class="t" style="left:2752.08px;top:1588px;font-size:20.4px;line-height:22px;letter-spacing:0.305px;color:#959595;-webkit-text-stroke:0.3px #959595;">React Flow</span>
</div></div></main>
</div>
<script>(function(){var a=document.getElementById("app"),w=window.innerWidth;if(w&&Math.abs(w-2880)>1){var k=w/2880;a.style.transformOrigin="0 0";a.style.transform="scale("+k+")";document.documentElement.style.width=document.body.style.width=w+"px";document.documentElement.style.height=document.body.style.height=Math.round(1618*k)+"px";}})();</script>
</body></html>
